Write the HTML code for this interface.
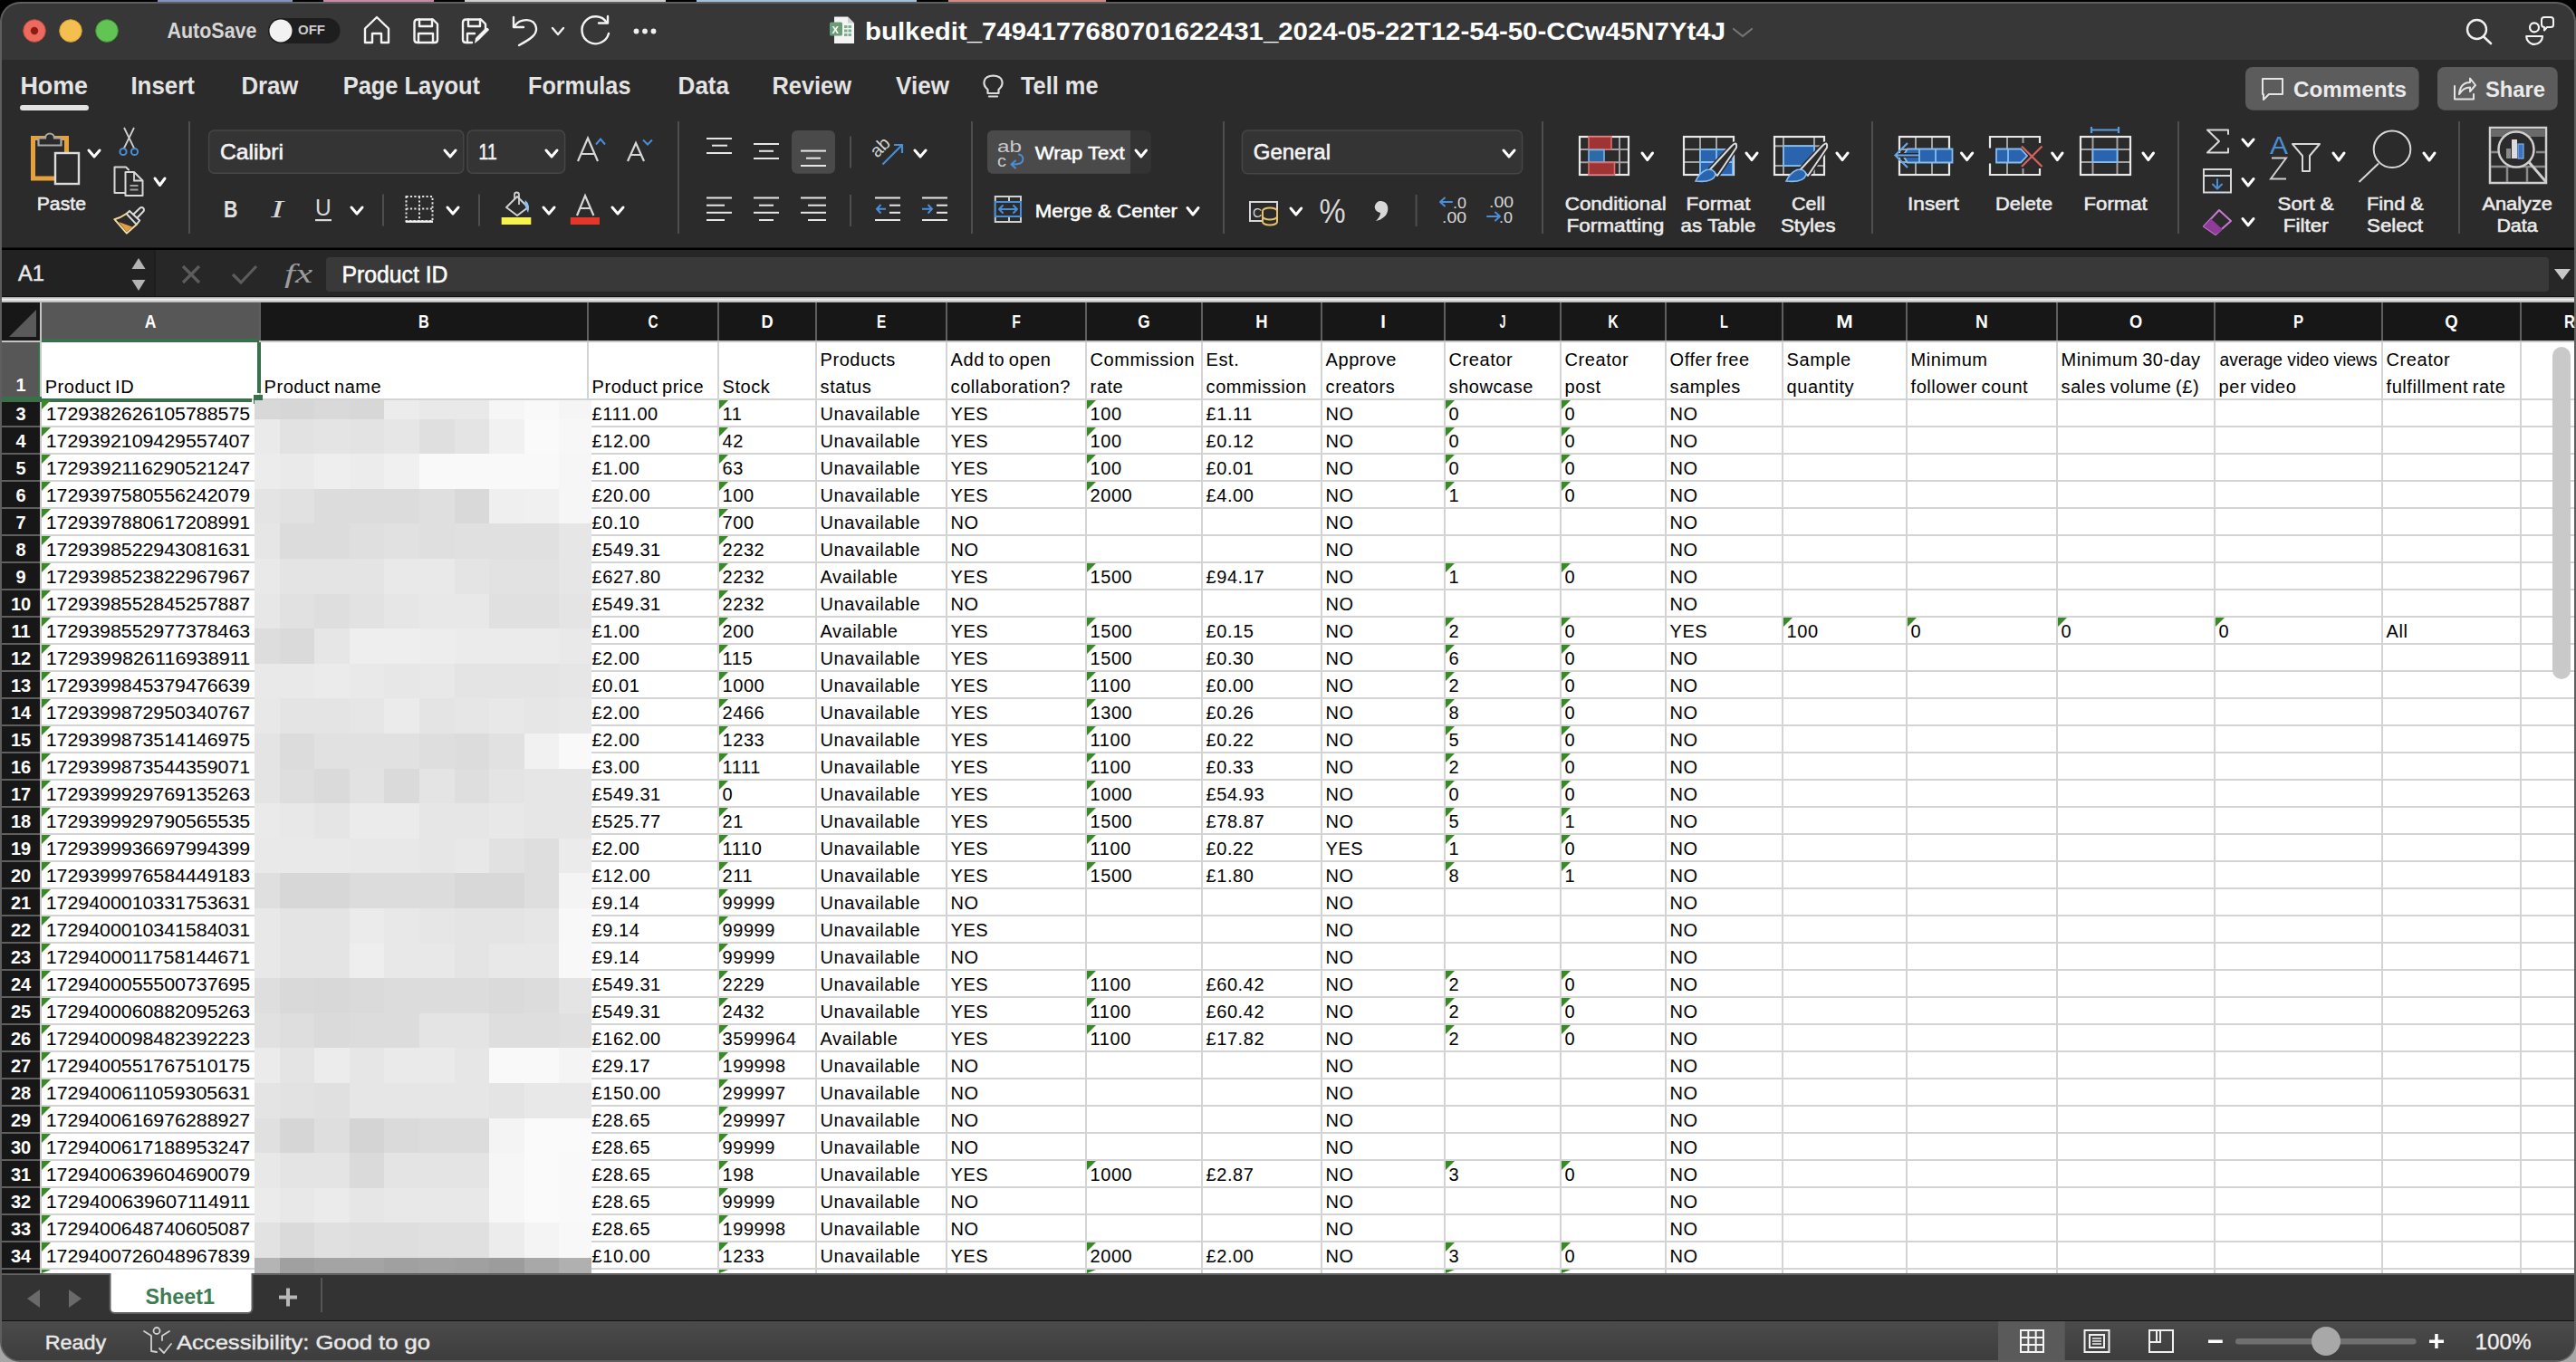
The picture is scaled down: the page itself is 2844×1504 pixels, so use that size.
<!DOCTYPE html><html><head><meta charset="utf-8"><style>html,body{margin:0;padding:0;background:#000;overflow:hidden}svg{display:block}text{white-space:pre}</style></head><body><svg width="2844" height="1504" viewBox="0 0 2844 1504"><rect x="0" y="0" width="2844" height="1504" fill="#000" />
<rect x="0" y="760" width="2844" height="744" fill="#a6a6a6" />
<rect x="174" y="0" width="149" height="2" fill="#7f93c0" />
<rect x="357" y="0" width="122" height="2" fill="#c88aa8" />
<rect x="513" y="0" width="222" height="2" fill="#cfcfcf" />
<rect x="769" y="0" width="243" height="2" fill="#9fc0d8" />
<rect x="1047" y="0" width="174" height="2" fill="#d08a80" />
<g>
<rect x="0" y="2" width="2844" height="1502" fill="#5e5e5e" rx="22" />
<rect x="2" y="4" width="2840" height="1498" fill="#373737" rx="20" />
</g>
<rect x="2" y="66" width="2840" height="207" fill="#2b2b2b" />
<rect x="2" y="273" width="2840" height="1" fill="#151515" />
<rect x="2" y="274" width="2840" height="2" fill="#000000" />
<rect x="2" y="276" width="2840" height="51" fill="#272727" />
<rect x="2" y="276" width="168" height="51" fill="#222222" />
<rect x="170" y="276" width="2" height="51" fill="#1e1e1e" />
<rect x="2" y="327" width="2840" height="1" fill="#111" />
<defs><linearGradient id="lg1" x1="0" y1="0" x2="0" y2="1"><stop offset="0" stop-color="#9a9a9a"/><stop offset="0.45" stop-color="#f4f4f4"/><stop offset="1" stop-color="#a8a8a8"/></linearGradient><linearGradient id="sb" x1="0" y1="0" x2="0" y2="1"><stop offset="0" stop-color="#4b4b4b"/><stop offset="1" stop-color="#3d3d3d"/></linearGradient></defs>
<rect x="2" y="328" width="2840" height="6" fill="url(#lg1)" />
<rect x="46" y="378" width="2796" height="1028" fill="#ffffff" />
<rect x="2" y="334" width="2840" height="42" fill="#171717" />
<rect x="46" y="334" width="240" height="40" fill="#575757" />
<rect x="46" y="374" width="240" height="4" fill="#3a7049" />
<text x="166.0" y="362" font-family="Liberation Sans" font-size="21" font-weight="bold" font-style="normal" fill="#ffffff" text-anchor="middle" textLength="12.7" lengthAdjust="spacingAndGlyphs" >A</text>
<rect x="286" y="334" width="2" height="42" fill="#5f5f5f" />
<text x="468.0" y="362" font-family="Liberation Sans" font-size="21" font-weight="bold" font-style="normal" fill="#ffffff" text-anchor="middle" textLength="11.8" lengthAdjust="spacingAndGlyphs" >B</text>
<rect x="648" y="334" width="2" height="42" fill="#5f5f5f" />
<text x="721.0" y="362" font-family="Liberation Sans" font-size="21" font-weight="bold" font-style="normal" fill="#ffffff" text-anchor="middle" textLength="11.1" lengthAdjust="spacingAndGlyphs" >C</text>
<rect x="792" y="334" width="2" height="42" fill="#5f5f5f" />
<text x="847.0" y="362" font-family="Liberation Sans" font-size="21" font-weight="bold" font-style="normal" fill="#ffffff" text-anchor="middle" textLength="13.2" lengthAdjust="spacingAndGlyphs" >D</text>
<rect x="900" y="334" width="2" height="42" fill="#5f5f5f" />
<text x="973.0" y="362" font-family="Liberation Sans" font-size="21" font-weight="bold" font-style="normal" fill="#ffffff" text-anchor="middle" textLength="10.2" lengthAdjust="spacingAndGlyphs" >E</text>
<rect x="1044" y="334" width="2" height="42" fill="#5f5f5f" />
<text x="1122.0" y="362" font-family="Liberation Sans" font-size="21" font-weight="bold" font-style="normal" fill="#ffffff" text-anchor="middle" textLength="9.6" lengthAdjust="spacingAndGlyphs" >F</text>
<rect x="1198" y="334" width="2" height="42" fill="#5f5f5f" />
<text x="1263.0" y="362" font-family="Liberation Sans" font-size="21" font-weight="bold" font-style="normal" fill="#ffffff" text-anchor="middle" textLength="13.4" lengthAdjust="spacingAndGlyphs" >G</text>
<rect x="1326" y="334" width="2" height="42" fill="#5f5f5f" />
<text x="1393.0" y="362" font-family="Liberation Sans" font-size="21" font-weight="bold" font-style="normal" fill="#ffffff" text-anchor="middle" textLength="13.3" lengthAdjust="spacingAndGlyphs" >H</text>
<rect x="1458" y="334" width="2" height="42" fill="#5f5f5f" />
<text x="1527.0" y="362" font-family="Liberation Sans" font-size="21" font-weight="bold" font-style="normal" fill="#ffffff" text-anchor="middle" textLength="5.6" lengthAdjust="spacingAndGlyphs" >I</text>
<rect x="1594" y="334" width="2" height="42" fill="#5f5f5f" />
<text x="1659.0" y="362" font-family="Liberation Sans" font-size="21" font-weight="bold" font-style="normal" fill="#ffffff" text-anchor="middle" textLength="7" lengthAdjust="spacingAndGlyphs" >J</text>
<rect x="1722" y="334" width="2" height="42" fill="#5f5f5f" />
<text x="1781.0" y="362" font-family="Liberation Sans" font-size="21" font-weight="bold" font-style="normal" fill="#ffffff" text-anchor="middle" textLength="11.5" lengthAdjust="spacingAndGlyphs" >K</text>
<rect x="1838" y="334" width="2" height="42" fill="#5f5f5f" />
<text x="1903.5" y="362" font-family="Liberation Sans" font-size="21" font-weight="bold" font-style="normal" fill="#ffffff" text-anchor="middle" textLength="8.9" lengthAdjust="spacingAndGlyphs" >L</text>
<rect x="1967" y="334" width="2" height="42" fill="#5f5f5f" />
<text x="2036.5" y="362" font-family="Liberation Sans" font-size="21" font-weight="bold" font-style="normal" fill="#ffffff" text-anchor="middle" textLength="18.4" lengthAdjust="spacingAndGlyphs" >M</text>
<rect x="2104" y="334" width="2" height="42" fill="#5f5f5f" />
<text x="2188.0" y="362" font-family="Liberation Sans" font-size="21" font-weight="bold" font-style="normal" fill="#ffffff" text-anchor="middle" textLength="13.8" lengthAdjust="spacingAndGlyphs" >N</text>
<rect x="2270" y="334" width="2" height="42" fill="#5f5f5f" />
<text x="2358.0" y="362" font-family="Liberation Sans" font-size="21" font-weight="bold" font-style="normal" fill="#ffffff" text-anchor="middle" textLength="14.2" lengthAdjust="spacingAndGlyphs" >O</text>
<rect x="2444" y="334" width="2" height="42" fill="#5f5f5f" />
<text x="2537.5" y="362" font-family="Liberation Sans" font-size="21" font-weight="bold" font-style="normal" fill="#ffffff" text-anchor="middle" textLength="11.2" lengthAdjust="spacingAndGlyphs" >P</text>
<rect x="2629" y="334" width="2" height="42" fill="#5f5f5f" />
<text x="2706.5" y="362" font-family="Liberation Sans" font-size="21" font-weight="bold" font-style="normal" fill="#ffffff" text-anchor="middle" textLength="14.4" lengthAdjust="spacingAndGlyphs" >Q</text>
<rect x="2782" y="334" width="2" height="42" fill="#5f5f5f" />
<text x="2837" y="362" font-family="Liberation Sans" font-size="21" font-weight="bold" font-style="normal" fill="#ffffff" text-anchor="middle" textLength="11.8" lengthAdjust="spacingAndGlyphs" >R</text>
<rect x="2" y="376" width="2840" height="2" fill="#c4c4c4" />
<rect x="46" y="374" width="240" height="4" fill="#3a7049" />
<rect x="44" y="334" width="2" height="44" fill="#c4c4c4" />
<path d="M10 372 L40 342 L40 372 Z" stroke="none" stroke-width="2" fill="#5a5a5a" />
<rect x="2" y="378" width="42" height="1028" fill="#171717" />
<rect x="2" y="378" width="40" height="62" fill="#575757" />
<rect x="42" y="378" width="4" height="66" fill="#3a7049" />
<rect x="44" y="378" width="2" height="1028" fill="#c8c8c8" />
<rect x="2" y="440" width="42" height="2" fill="#5e5e5e" />
<rect x="46" y="440" width="2796" height="2" fill="#d4d4d4" />
<text x="23" y="464" font-family="Liberation Sans" font-size="20" font-weight="bold" font-style="normal" fill="#ffffff" text-anchor="middle" >3</text>
<rect x="2" y="470" width="42" height="2" fill="#5e5e5e" />
<rect x="46" y="470" width="2796" height="2" fill="#d4d4d4" />
<text x="23" y="494" font-family="Liberation Sans" font-size="20" font-weight="bold" font-style="normal" fill="#ffffff" text-anchor="middle" >4</text>
<rect x="2" y="500" width="42" height="2" fill="#5e5e5e" />
<rect x="46" y="500" width="2796" height="2" fill="#d4d4d4" />
<text x="23" y="524" font-family="Liberation Sans" font-size="20" font-weight="bold" font-style="normal" fill="#ffffff" text-anchor="middle" >5</text>
<rect x="2" y="530" width="42" height="2" fill="#5e5e5e" />
<rect x="46" y="530" width="2796" height="2" fill="#d4d4d4" />
<text x="23" y="554" font-family="Liberation Sans" font-size="20" font-weight="bold" font-style="normal" fill="#ffffff" text-anchor="middle" >6</text>
<rect x="2" y="560" width="42" height="2" fill="#5e5e5e" />
<rect x="46" y="560" width="2796" height="2" fill="#d4d4d4" />
<text x="23" y="584" font-family="Liberation Sans" font-size="20" font-weight="bold" font-style="normal" fill="#ffffff" text-anchor="middle" >7</text>
<rect x="2" y="590" width="42" height="2" fill="#5e5e5e" />
<rect x="46" y="590" width="2796" height="2" fill="#d4d4d4" />
<text x="23" y="614" font-family="Liberation Sans" font-size="20" font-weight="bold" font-style="normal" fill="#ffffff" text-anchor="middle" >8</text>
<rect x="2" y="620" width="42" height="2" fill="#5e5e5e" />
<rect x="46" y="620" width="2796" height="2" fill="#d4d4d4" />
<text x="23" y="644" font-family="Liberation Sans" font-size="20" font-weight="bold" font-style="normal" fill="#ffffff" text-anchor="middle" >9</text>
<rect x="2" y="650" width="42" height="2" fill="#5e5e5e" />
<rect x="46" y="650" width="2796" height="2" fill="#d4d4d4" />
<text x="23" y="674" font-family="Liberation Sans" font-size="20" font-weight="bold" font-style="normal" fill="#ffffff" text-anchor="middle" >10</text>
<rect x="2" y="680" width="42" height="2" fill="#5e5e5e" />
<rect x="46" y="680" width="2796" height="2" fill="#d4d4d4" />
<text x="23" y="704" font-family="Liberation Sans" font-size="20" font-weight="bold" font-style="normal" fill="#ffffff" text-anchor="middle" >11</text>
<rect x="2" y="710" width="42" height="2" fill="#5e5e5e" />
<rect x="46" y="710" width="2796" height="2" fill="#d4d4d4" />
<text x="23" y="734" font-family="Liberation Sans" font-size="20" font-weight="bold" font-style="normal" fill="#ffffff" text-anchor="middle" >12</text>
<rect x="2" y="740" width="42" height="2" fill="#5e5e5e" />
<rect x="46" y="740" width="2796" height="2" fill="#d4d4d4" />
<text x="23" y="764" font-family="Liberation Sans" font-size="20" font-weight="bold" font-style="normal" fill="#ffffff" text-anchor="middle" >13</text>
<rect x="2" y="770" width="42" height="2" fill="#5e5e5e" />
<rect x="46" y="770" width="2796" height="2" fill="#d4d4d4" />
<text x="23" y="794" font-family="Liberation Sans" font-size="20" font-weight="bold" font-style="normal" fill="#ffffff" text-anchor="middle" >14</text>
<rect x="2" y="800" width="42" height="2" fill="#5e5e5e" />
<rect x="46" y="800" width="2796" height="2" fill="#d4d4d4" />
<text x="23" y="824" font-family="Liberation Sans" font-size="20" font-weight="bold" font-style="normal" fill="#ffffff" text-anchor="middle" >15</text>
<rect x="2" y="830" width="42" height="2" fill="#5e5e5e" />
<rect x="46" y="830" width="2796" height="2" fill="#d4d4d4" />
<text x="23" y="854" font-family="Liberation Sans" font-size="20" font-weight="bold" font-style="normal" fill="#ffffff" text-anchor="middle" >16</text>
<rect x="2" y="860" width="42" height="2" fill="#5e5e5e" />
<rect x="46" y="860" width="2796" height="2" fill="#d4d4d4" />
<text x="23" y="884" font-family="Liberation Sans" font-size="20" font-weight="bold" font-style="normal" fill="#ffffff" text-anchor="middle" >17</text>
<rect x="2" y="890" width="42" height="2" fill="#5e5e5e" />
<rect x="46" y="890" width="2796" height="2" fill="#d4d4d4" />
<text x="23" y="914" font-family="Liberation Sans" font-size="20" font-weight="bold" font-style="normal" fill="#ffffff" text-anchor="middle" >18</text>
<rect x="2" y="920" width="42" height="2" fill="#5e5e5e" />
<rect x="46" y="920" width="2796" height="2" fill="#d4d4d4" />
<text x="23" y="944" font-family="Liberation Sans" font-size="20" font-weight="bold" font-style="normal" fill="#ffffff" text-anchor="middle" >19</text>
<rect x="2" y="950" width="42" height="2" fill="#5e5e5e" />
<rect x="46" y="950" width="2796" height="2" fill="#d4d4d4" />
<text x="23" y="974" font-family="Liberation Sans" font-size="20" font-weight="bold" font-style="normal" fill="#ffffff" text-anchor="middle" >20</text>
<rect x="2" y="980" width="42" height="2" fill="#5e5e5e" />
<rect x="46" y="980" width="2796" height="2" fill="#d4d4d4" />
<text x="23" y="1004" font-family="Liberation Sans" font-size="20" font-weight="bold" font-style="normal" fill="#ffffff" text-anchor="middle" >21</text>
<rect x="2" y="1010" width="42" height="2" fill="#5e5e5e" />
<rect x="46" y="1010" width="2796" height="2" fill="#d4d4d4" />
<text x="23" y="1034" font-family="Liberation Sans" font-size="20" font-weight="bold" font-style="normal" fill="#ffffff" text-anchor="middle" >22</text>
<rect x="2" y="1040" width="42" height="2" fill="#5e5e5e" />
<rect x="46" y="1040" width="2796" height="2" fill="#d4d4d4" />
<text x="23" y="1064" font-family="Liberation Sans" font-size="20" font-weight="bold" font-style="normal" fill="#ffffff" text-anchor="middle" >23</text>
<rect x="2" y="1070" width="42" height="2" fill="#5e5e5e" />
<rect x="46" y="1070" width="2796" height="2" fill="#d4d4d4" />
<text x="23" y="1094" font-family="Liberation Sans" font-size="20" font-weight="bold" font-style="normal" fill="#ffffff" text-anchor="middle" >24</text>
<rect x="2" y="1100" width="42" height="2" fill="#5e5e5e" />
<rect x="46" y="1100" width="2796" height="2" fill="#d4d4d4" />
<text x="23" y="1124" font-family="Liberation Sans" font-size="20" font-weight="bold" font-style="normal" fill="#ffffff" text-anchor="middle" >25</text>
<rect x="2" y="1130" width="42" height="2" fill="#5e5e5e" />
<rect x="46" y="1130" width="2796" height="2" fill="#d4d4d4" />
<text x="23" y="1154" font-family="Liberation Sans" font-size="20" font-weight="bold" font-style="normal" fill="#ffffff" text-anchor="middle" >26</text>
<rect x="2" y="1160" width="42" height="2" fill="#5e5e5e" />
<rect x="46" y="1160" width="2796" height="2" fill="#d4d4d4" />
<text x="23" y="1184" font-family="Liberation Sans" font-size="20" font-weight="bold" font-style="normal" fill="#ffffff" text-anchor="middle" >27</text>
<rect x="2" y="1190" width="42" height="2" fill="#5e5e5e" />
<rect x="46" y="1190" width="2796" height="2" fill="#d4d4d4" />
<text x="23" y="1214" font-family="Liberation Sans" font-size="20" font-weight="bold" font-style="normal" fill="#ffffff" text-anchor="middle" >28</text>
<rect x="2" y="1220" width="42" height="2" fill="#5e5e5e" />
<rect x="46" y="1220" width="2796" height="2" fill="#d4d4d4" />
<text x="23" y="1244" font-family="Liberation Sans" font-size="20" font-weight="bold" font-style="normal" fill="#ffffff" text-anchor="middle" >29</text>
<rect x="2" y="1250" width="42" height="2" fill="#5e5e5e" />
<rect x="46" y="1250" width="2796" height="2" fill="#d4d4d4" />
<text x="23" y="1274" font-family="Liberation Sans" font-size="20" font-weight="bold" font-style="normal" fill="#ffffff" text-anchor="middle" >30</text>
<rect x="2" y="1280" width="42" height="2" fill="#5e5e5e" />
<rect x="46" y="1280" width="2796" height="2" fill="#d4d4d4" />
<text x="23" y="1304" font-family="Liberation Sans" font-size="20" font-weight="bold" font-style="normal" fill="#ffffff" text-anchor="middle" >31</text>
<rect x="2" y="1310" width="42" height="2" fill="#5e5e5e" />
<rect x="46" y="1310" width="2796" height="2" fill="#d4d4d4" />
<text x="23" y="1334" font-family="Liberation Sans" font-size="20" font-weight="bold" font-style="normal" fill="#ffffff" text-anchor="middle" >32</text>
<rect x="2" y="1340" width="42" height="2" fill="#5e5e5e" />
<rect x="46" y="1340" width="2796" height="2" fill="#d4d4d4" />
<text x="23" y="1364" font-family="Liberation Sans" font-size="20" font-weight="bold" font-style="normal" fill="#ffffff" text-anchor="middle" >33</text>
<rect x="2" y="1370" width="42" height="2" fill="#5e5e5e" />
<rect x="46" y="1370" width="2796" height="2" fill="#d4d4d4" />
<text x="23" y="1394" font-family="Liberation Sans" font-size="20" font-weight="bold" font-style="normal" fill="#ffffff" text-anchor="middle" >34</text>
<rect x="2" y="1400" width="42" height="2" fill="#5e5e5e" />
<rect x="46" y="1400" width="2796" height="2" fill="#d4d4d4" />
<text x="23" y="432" font-family="Liberation Sans" font-size="20" font-weight="bold" font-style="normal" fill="#ffffff" text-anchor="middle" >1</text>
<rect x="286" y="378" width="2" height="1028" fill="#d4d4d4" />
<rect x="648" y="378" width="2" height="1028" fill="#d4d4d4" />
<rect x="792" y="378" width="2" height="1028" fill="#d4d4d4" />
<rect x="900" y="378" width="2" height="1028" fill="#d4d4d4" />
<rect x="1044" y="378" width="2" height="1028" fill="#d4d4d4" />
<rect x="1198" y="378" width="2" height="1028" fill="#d4d4d4" />
<rect x="1326" y="378" width="2" height="1028" fill="#d4d4d4" />
<rect x="1458" y="378" width="2" height="1028" fill="#d4d4d4" />
<rect x="1594" y="378" width="2" height="1028" fill="#d4d4d4" />
<rect x="1722" y="378" width="2" height="1028" fill="#d4d4d4" />
<rect x="1838" y="378" width="2" height="1028" fill="#d4d4d4" />
<rect x="1967" y="378" width="2" height="1028" fill="#d4d4d4" />
<rect x="2104" y="378" width="2" height="1028" fill="#d4d4d4" />
<rect x="2270" y="378" width="2" height="1028" fill="#d4d4d4" />
<rect x="2444" y="378" width="2" height="1028" fill="#d4d4d4" />
<rect x="2629" y="378" width="2" height="1028" fill="#d4d4d4" />
<rect x="2782" y="378" width="2" height="1028" fill="#d4d4d4" />
<rect x="2" y="438" width="44" height="6" fill="#3a7049" />
<rect x="46" y="440" width="232" height="4" fill="#3a7049" />
<rect x="284" y="378" width="4" height="56" fill="#3a7049" />
<rect x="280" y="436" width="10" height="6" fill="#3a7049" />
<rect x="280" y="442" width="2" height="4" fill="#3a7049" />
<path d="M46 442 L56 442 L46 452 Z" stroke="none" stroke-width="2" fill="#388a27" />
<text x="50.7" y="463.8" font-family="Liberation Sans" font-size="20" font-weight="normal" font-style="normal" fill="#000" text-anchor="start" textLength="225.5" lengthAdjust="spacingAndGlyphs" >1729382626105788575</text>
<text x="653.6" y="463.8" font-family="Liberation Sans" font-size="20" font-weight="normal" font-style="normal" fill="#000" text-anchor="start" letter-spacing="0.55" word-spacing="-1.5">£111.00</text>
<path d="M794 442 L804 442 L794 452 Z" stroke="none" stroke-width="2" fill="#388a27" />
<text x="797.6" y="463.8" font-family="Liberation Sans" font-size="20" font-weight="normal" font-style="normal" fill="#000" text-anchor="start" letter-spacing="0.55" word-spacing="-1.5">11</text>
<text x="905.6" y="463.8" font-family="Liberation Sans" font-size="20" font-weight="normal" font-style="normal" fill="#000" text-anchor="start" letter-spacing="0.55" word-spacing="-1.5">Unavailable</text>
<text x="1049.6" y="463.8" font-family="Liberation Sans" font-size="20" font-weight="normal" font-style="normal" fill="#000" text-anchor="start" letter-spacing="0.55" word-spacing="-1.5">YES</text>
<path d="M1200 442 L1210 442 L1200 452 Z" stroke="none" stroke-width="2" fill="#388a27" />
<text x="1203.6" y="463.8" font-family="Liberation Sans" font-size="20" font-weight="normal" font-style="normal" fill="#000" text-anchor="start" letter-spacing="0.55" word-spacing="-1.5">100</text>
<text x="1331.6" y="463.8" font-family="Liberation Sans" font-size="20" font-weight="normal" font-style="normal" fill="#000" text-anchor="start" letter-spacing="0.55" word-spacing="-1.5">£1.11</text>
<text x="1463.6" y="463.8" font-family="Liberation Sans" font-size="20" font-weight="normal" font-style="normal" fill="#000" text-anchor="start" letter-spacing="0.55" word-spacing="-1.5">NO</text>
<path d="M1596 442 L1606 442 L1596 452 Z" stroke="none" stroke-width="2" fill="#388a27" />
<text x="1599.6" y="463.8" font-family="Liberation Sans" font-size="20" font-weight="normal" font-style="normal" fill="#000" text-anchor="start" letter-spacing="0.55" word-spacing="-1.5">0</text>
<path d="M1724 442 L1734 442 L1724 452 Z" stroke="none" stroke-width="2" fill="#388a27" />
<text x="1727.6" y="463.8" font-family="Liberation Sans" font-size="20" font-weight="normal" font-style="normal" fill="#000" text-anchor="start" letter-spacing="0.55" word-spacing="-1.5">0</text>
<text x="1843.6" y="463.8" font-family="Liberation Sans" font-size="20" font-weight="normal" font-style="normal" fill="#000" text-anchor="start" letter-spacing="0.55" word-spacing="-1.5">NO</text>
<path d="M46 472 L56 472 L46 482 Z" stroke="none" stroke-width="2" fill="#388a27" />
<text x="50.7" y="493.8" font-family="Liberation Sans" font-size="20" font-weight="normal" font-style="normal" fill="#000" text-anchor="start" textLength="225.5" lengthAdjust="spacingAndGlyphs" >1729392109429557407</text>
<text x="653.6" y="493.8" font-family="Liberation Sans" font-size="20" font-weight="normal" font-style="normal" fill="#000" text-anchor="start" letter-spacing="0.55" word-spacing="-1.5">£12.00</text>
<path d="M794 472 L804 472 L794 482 Z" stroke="none" stroke-width="2" fill="#388a27" />
<text x="797.6" y="493.8" font-family="Liberation Sans" font-size="20" font-weight="normal" font-style="normal" fill="#000" text-anchor="start" letter-spacing="0.55" word-spacing="-1.5">42</text>
<text x="905.6" y="493.8" font-family="Liberation Sans" font-size="20" font-weight="normal" font-style="normal" fill="#000" text-anchor="start" letter-spacing="0.55" word-spacing="-1.5">Unavailable</text>
<text x="1049.6" y="493.8" font-family="Liberation Sans" font-size="20" font-weight="normal" font-style="normal" fill="#000" text-anchor="start" letter-spacing="0.55" word-spacing="-1.5">YES</text>
<path d="M1200 472 L1210 472 L1200 482 Z" stroke="none" stroke-width="2" fill="#388a27" />
<text x="1203.6" y="493.8" font-family="Liberation Sans" font-size="20" font-weight="normal" font-style="normal" fill="#000" text-anchor="start" letter-spacing="0.55" word-spacing="-1.5">100</text>
<text x="1331.6" y="493.8" font-family="Liberation Sans" font-size="20" font-weight="normal" font-style="normal" fill="#000" text-anchor="start" letter-spacing="0.55" word-spacing="-1.5">£0.12</text>
<text x="1463.6" y="493.8" font-family="Liberation Sans" font-size="20" font-weight="normal" font-style="normal" fill="#000" text-anchor="start" letter-spacing="0.55" word-spacing="-1.5">NO</text>
<path d="M1596 472 L1606 472 L1596 482 Z" stroke="none" stroke-width="2" fill="#388a27" />
<text x="1599.6" y="493.8" font-family="Liberation Sans" font-size="20" font-weight="normal" font-style="normal" fill="#000" text-anchor="start" letter-spacing="0.55" word-spacing="-1.5">0</text>
<path d="M1724 472 L1734 472 L1724 482 Z" stroke="none" stroke-width="2" fill="#388a27" />
<text x="1727.6" y="493.8" font-family="Liberation Sans" font-size="20" font-weight="normal" font-style="normal" fill="#000" text-anchor="start" letter-spacing="0.55" word-spacing="-1.5">0</text>
<text x="1843.6" y="493.8" font-family="Liberation Sans" font-size="20" font-weight="normal" font-style="normal" fill="#000" text-anchor="start" letter-spacing="0.55" word-spacing="-1.5">NO</text>
<path d="M46 502 L56 502 L46 512 Z" stroke="none" stroke-width="2" fill="#388a27" />
<text x="50.7" y="523.8" font-family="Liberation Sans" font-size="20" font-weight="normal" font-style="normal" fill="#000" text-anchor="start" textLength="225.5" lengthAdjust="spacingAndGlyphs" >1729392116290521247</text>
<text x="653.6" y="523.8" font-family="Liberation Sans" font-size="20" font-weight="normal" font-style="normal" fill="#000" text-anchor="start" letter-spacing="0.55" word-spacing="-1.5">£1.00</text>
<path d="M794 502 L804 502 L794 512 Z" stroke="none" stroke-width="2" fill="#388a27" />
<text x="797.6" y="523.8" font-family="Liberation Sans" font-size="20" font-weight="normal" font-style="normal" fill="#000" text-anchor="start" letter-spacing="0.55" word-spacing="-1.5">63</text>
<text x="905.6" y="523.8" font-family="Liberation Sans" font-size="20" font-weight="normal" font-style="normal" fill="#000" text-anchor="start" letter-spacing="0.55" word-spacing="-1.5">Unavailable</text>
<text x="1049.6" y="523.8" font-family="Liberation Sans" font-size="20" font-weight="normal" font-style="normal" fill="#000" text-anchor="start" letter-spacing="0.55" word-spacing="-1.5">YES</text>
<path d="M1200 502 L1210 502 L1200 512 Z" stroke="none" stroke-width="2" fill="#388a27" />
<text x="1203.6" y="523.8" font-family="Liberation Sans" font-size="20" font-weight="normal" font-style="normal" fill="#000" text-anchor="start" letter-spacing="0.55" word-spacing="-1.5">100</text>
<text x="1331.6" y="523.8" font-family="Liberation Sans" font-size="20" font-weight="normal" font-style="normal" fill="#000" text-anchor="start" letter-spacing="0.55" word-spacing="-1.5">£0.01</text>
<text x="1463.6" y="523.8" font-family="Liberation Sans" font-size="20" font-weight="normal" font-style="normal" fill="#000" text-anchor="start" letter-spacing="0.55" word-spacing="-1.5">NO</text>
<path d="M1596 502 L1606 502 L1596 512 Z" stroke="none" stroke-width="2" fill="#388a27" />
<text x="1599.6" y="523.8" font-family="Liberation Sans" font-size="20" font-weight="normal" font-style="normal" fill="#000" text-anchor="start" letter-spacing="0.55" word-spacing="-1.5">0</text>
<path d="M1724 502 L1734 502 L1724 512 Z" stroke="none" stroke-width="2" fill="#388a27" />
<text x="1727.6" y="523.8" font-family="Liberation Sans" font-size="20" font-weight="normal" font-style="normal" fill="#000" text-anchor="start" letter-spacing="0.55" word-spacing="-1.5">0</text>
<text x="1843.6" y="523.8" font-family="Liberation Sans" font-size="20" font-weight="normal" font-style="normal" fill="#000" text-anchor="start" letter-spacing="0.55" word-spacing="-1.5">NO</text>
<path d="M46 532 L56 532 L46 542 Z" stroke="none" stroke-width="2" fill="#388a27" />
<text x="50.7" y="553.8" font-family="Liberation Sans" font-size="20" font-weight="normal" font-style="normal" fill="#000" text-anchor="start" textLength="225.5" lengthAdjust="spacingAndGlyphs" >1729397580556242079</text>
<text x="653.6" y="553.8" font-family="Liberation Sans" font-size="20" font-weight="normal" font-style="normal" fill="#000" text-anchor="start" letter-spacing="0.55" word-spacing="-1.5">£20.00</text>
<path d="M794 532 L804 532 L794 542 Z" stroke="none" stroke-width="2" fill="#388a27" />
<text x="797.6" y="553.8" font-family="Liberation Sans" font-size="20" font-weight="normal" font-style="normal" fill="#000" text-anchor="start" letter-spacing="0.55" word-spacing="-1.5">100</text>
<text x="905.6" y="553.8" font-family="Liberation Sans" font-size="20" font-weight="normal" font-style="normal" fill="#000" text-anchor="start" letter-spacing="0.55" word-spacing="-1.5">Unavailable</text>
<text x="1049.6" y="553.8" font-family="Liberation Sans" font-size="20" font-weight="normal" font-style="normal" fill="#000" text-anchor="start" letter-spacing="0.55" word-spacing="-1.5">YES</text>
<path d="M1200 532 L1210 532 L1200 542 Z" stroke="none" stroke-width="2" fill="#388a27" />
<text x="1203.6" y="553.8" font-family="Liberation Sans" font-size="20" font-weight="normal" font-style="normal" fill="#000" text-anchor="start" letter-spacing="0.55" word-spacing="-1.5">2000</text>
<text x="1331.6" y="553.8" font-family="Liberation Sans" font-size="20" font-weight="normal" font-style="normal" fill="#000" text-anchor="start" letter-spacing="0.55" word-spacing="-1.5">£4.00</text>
<text x="1463.6" y="553.8" font-family="Liberation Sans" font-size="20" font-weight="normal" font-style="normal" fill="#000" text-anchor="start" letter-spacing="0.55" word-spacing="-1.5">NO</text>
<path d="M1596 532 L1606 532 L1596 542 Z" stroke="none" stroke-width="2" fill="#388a27" />
<text x="1599.6" y="553.8" font-family="Liberation Sans" font-size="20" font-weight="normal" font-style="normal" fill="#000" text-anchor="start" letter-spacing="0.55" word-spacing="-1.5">1</text>
<path d="M1724 532 L1734 532 L1724 542 Z" stroke="none" stroke-width="2" fill="#388a27" />
<text x="1727.6" y="553.8" font-family="Liberation Sans" font-size="20" font-weight="normal" font-style="normal" fill="#000" text-anchor="start" letter-spacing="0.55" word-spacing="-1.5">0</text>
<text x="1843.6" y="553.8" font-family="Liberation Sans" font-size="20" font-weight="normal" font-style="normal" fill="#000" text-anchor="start" letter-spacing="0.55" word-spacing="-1.5">NO</text>
<path d="M46 562 L56 562 L46 572 Z" stroke="none" stroke-width="2" fill="#388a27" />
<text x="50.7" y="583.8" font-family="Liberation Sans" font-size="20" font-weight="normal" font-style="normal" fill="#000" text-anchor="start" textLength="225.5" lengthAdjust="spacingAndGlyphs" >1729397880617208991</text>
<text x="653.6" y="583.8" font-family="Liberation Sans" font-size="20" font-weight="normal" font-style="normal" fill="#000" text-anchor="start" letter-spacing="0.55" word-spacing="-1.5">£0.10</text>
<path d="M794 562 L804 562 L794 572 Z" stroke="none" stroke-width="2" fill="#388a27" />
<text x="797.6" y="583.8" font-family="Liberation Sans" font-size="20" font-weight="normal" font-style="normal" fill="#000" text-anchor="start" letter-spacing="0.55" word-spacing="-1.5">700</text>
<text x="905.6" y="583.8" font-family="Liberation Sans" font-size="20" font-weight="normal" font-style="normal" fill="#000" text-anchor="start" letter-spacing="0.55" word-spacing="-1.5">Unavailable</text>
<text x="1049.6" y="583.8" font-family="Liberation Sans" font-size="20" font-weight="normal" font-style="normal" fill="#000" text-anchor="start" letter-spacing="0.55" word-spacing="-1.5">NO</text>
<text x="1463.6" y="583.8" font-family="Liberation Sans" font-size="20" font-weight="normal" font-style="normal" fill="#000" text-anchor="start" letter-spacing="0.55" word-spacing="-1.5">NO</text>
<text x="1843.6" y="583.8" font-family="Liberation Sans" font-size="20" font-weight="normal" font-style="normal" fill="#000" text-anchor="start" letter-spacing="0.55" word-spacing="-1.5">NO</text>
<path d="M46 592 L56 592 L46 602 Z" stroke="none" stroke-width="2" fill="#388a27" />
<text x="50.7" y="613.8" font-family="Liberation Sans" font-size="20" font-weight="normal" font-style="normal" fill="#000" text-anchor="start" textLength="225.5" lengthAdjust="spacingAndGlyphs" >1729398522943081631</text>
<text x="653.6" y="613.8" font-family="Liberation Sans" font-size="20" font-weight="normal" font-style="normal" fill="#000" text-anchor="start" letter-spacing="0.55" word-spacing="-1.5">£549.31</text>
<path d="M794 592 L804 592 L794 602 Z" stroke="none" stroke-width="2" fill="#388a27" />
<text x="797.6" y="613.8" font-family="Liberation Sans" font-size="20" font-weight="normal" font-style="normal" fill="#000" text-anchor="start" letter-spacing="0.55" word-spacing="-1.5">2232</text>
<text x="905.6" y="613.8" font-family="Liberation Sans" font-size="20" font-weight="normal" font-style="normal" fill="#000" text-anchor="start" letter-spacing="0.55" word-spacing="-1.5">Unavailable</text>
<text x="1049.6" y="613.8" font-family="Liberation Sans" font-size="20" font-weight="normal" font-style="normal" fill="#000" text-anchor="start" letter-spacing="0.55" word-spacing="-1.5">NO</text>
<text x="1463.6" y="613.8" font-family="Liberation Sans" font-size="20" font-weight="normal" font-style="normal" fill="#000" text-anchor="start" letter-spacing="0.55" word-spacing="-1.5">NO</text>
<text x="1843.6" y="613.8" font-family="Liberation Sans" font-size="20" font-weight="normal" font-style="normal" fill="#000" text-anchor="start" letter-spacing="0.55" word-spacing="-1.5">NO</text>
<path d="M46 622 L56 622 L46 632 Z" stroke="none" stroke-width="2" fill="#388a27" />
<text x="50.7" y="643.8" font-family="Liberation Sans" font-size="20" font-weight="normal" font-style="normal" fill="#000" text-anchor="start" textLength="225.5" lengthAdjust="spacingAndGlyphs" >1729398523822967967</text>
<text x="653.6" y="643.8" font-family="Liberation Sans" font-size="20" font-weight="normal" font-style="normal" fill="#000" text-anchor="start" letter-spacing="0.55" word-spacing="-1.5">£627.80</text>
<path d="M794 622 L804 622 L794 632 Z" stroke="none" stroke-width="2" fill="#388a27" />
<text x="797.6" y="643.8" font-family="Liberation Sans" font-size="20" font-weight="normal" font-style="normal" fill="#000" text-anchor="start" letter-spacing="0.55" word-spacing="-1.5">2232</text>
<text x="905.6" y="643.8" font-family="Liberation Sans" font-size="20" font-weight="normal" font-style="normal" fill="#000" text-anchor="start" letter-spacing="0.55" word-spacing="-1.5">Available</text>
<text x="1049.6" y="643.8" font-family="Liberation Sans" font-size="20" font-weight="normal" font-style="normal" fill="#000" text-anchor="start" letter-spacing="0.55" word-spacing="-1.5">YES</text>
<path d="M1200 622 L1210 622 L1200 632 Z" stroke="none" stroke-width="2" fill="#388a27" />
<text x="1203.6" y="643.8" font-family="Liberation Sans" font-size="20" font-weight="normal" font-style="normal" fill="#000" text-anchor="start" letter-spacing="0.55" word-spacing="-1.5">1500</text>
<text x="1331.6" y="643.8" font-family="Liberation Sans" font-size="20" font-weight="normal" font-style="normal" fill="#000" text-anchor="start" letter-spacing="0.55" word-spacing="-1.5">£94.17</text>
<text x="1463.6" y="643.8" font-family="Liberation Sans" font-size="20" font-weight="normal" font-style="normal" fill="#000" text-anchor="start" letter-spacing="0.55" word-spacing="-1.5">NO</text>
<path d="M1596 622 L1606 622 L1596 632 Z" stroke="none" stroke-width="2" fill="#388a27" />
<text x="1599.6" y="643.8" font-family="Liberation Sans" font-size="20" font-weight="normal" font-style="normal" fill="#000" text-anchor="start" letter-spacing="0.55" word-spacing="-1.5">1</text>
<path d="M1724 622 L1734 622 L1724 632 Z" stroke="none" stroke-width="2" fill="#388a27" />
<text x="1727.6" y="643.8" font-family="Liberation Sans" font-size="20" font-weight="normal" font-style="normal" fill="#000" text-anchor="start" letter-spacing="0.55" word-spacing="-1.5">0</text>
<text x="1843.6" y="643.8" font-family="Liberation Sans" font-size="20" font-weight="normal" font-style="normal" fill="#000" text-anchor="start" letter-spacing="0.55" word-spacing="-1.5">NO</text>
<path d="M46 652 L56 652 L46 662 Z" stroke="none" stroke-width="2" fill="#388a27" />
<text x="50.7" y="673.8" font-family="Liberation Sans" font-size="20" font-weight="normal" font-style="normal" fill="#000" text-anchor="start" textLength="225.5" lengthAdjust="spacingAndGlyphs" >1729398552845257887</text>
<text x="653.6" y="673.8" font-family="Liberation Sans" font-size="20" font-weight="normal" font-style="normal" fill="#000" text-anchor="start" letter-spacing="0.55" word-spacing="-1.5">£549.31</text>
<path d="M794 652 L804 652 L794 662 Z" stroke="none" stroke-width="2" fill="#388a27" />
<text x="797.6" y="673.8" font-family="Liberation Sans" font-size="20" font-weight="normal" font-style="normal" fill="#000" text-anchor="start" letter-spacing="0.55" word-spacing="-1.5">2232</text>
<text x="905.6" y="673.8" font-family="Liberation Sans" font-size="20" font-weight="normal" font-style="normal" fill="#000" text-anchor="start" letter-spacing="0.55" word-spacing="-1.5">Unavailable</text>
<text x="1049.6" y="673.8" font-family="Liberation Sans" font-size="20" font-weight="normal" font-style="normal" fill="#000" text-anchor="start" letter-spacing="0.55" word-spacing="-1.5">NO</text>
<text x="1463.6" y="673.8" font-family="Liberation Sans" font-size="20" font-weight="normal" font-style="normal" fill="#000" text-anchor="start" letter-spacing="0.55" word-spacing="-1.5">NO</text>
<text x="1843.6" y="673.8" font-family="Liberation Sans" font-size="20" font-weight="normal" font-style="normal" fill="#000" text-anchor="start" letter-spacing="0.55" word-spacing="-1.5">NO</text>
<path d="M46 682 L56 682 L46 692 Z" stroke="none" stroke-width="2" fill="#388a27" />
<text x="50.7" y="703.8" font-family="Liberation Sans" font-size="20" font-weight="normal" font-style="normal" fill="#000" text-anchor="start" textLength="225.5" lengthAdjust="spacingAndGlyphs" >1729398552977378463</text>
<text x="653.6" y="703.8" font-family="Liberation Sans" font-size="20" font-weight="normal" font-style="normal" fill="#000" text-anchor="start" letter-spacing="0.55" word-spacing="-1.5">£1.00</text>
<path d="M794 682 L804 682 L794 692 Z" stroke="none" stroke-width="2" fill="#388a27" />
<text x="797.6" y="703.8" font-family="Liberation Sans" font-size="20" font-weight="normal" font-style="normal" fill="#000" text-anchor="start" letter-spacing="0.55" word-spacing="-1.5">200</text>
<text x="905.6" y="703.8" font-family="Liberation Sans" font-size="20" font-weight="normal" font-style="normal" fill="#000" text-anchor="start" letter-spacing="0.55" word-spacing="-1.5">Available</text>
<text x="1049.6" y="703.8" font-family="Liberation Sans" font-size="20" font-weight="normal" font-style="normal" fill="#000" text-anchor="start" letter-spacing="0.55" word-spacing="-1.5">YES</text>
<path d="M1200 682 L1210 682 L1200 692 Z" stroke="none" stroke-width="2" fill="#388a27" />
<text x="1203.6" y="703.8" font-family="Liberation Sans" font-size="20" font-weight="normal" font-style="normal" fill="#000" text-anchor="start" letter-spacing="0.55" word-spacing="-1.5">1500</text>
<text x="1331.6" y="703.8" font-family="Liberation Sans" font-size="20" font-weight="normal" font-style="normal" fill="#000" text-anchor="start" letter-spacing="0.55" word-spacing="-1.5">£0.15</text>
<text x="1463.6" y="703.8" font-family="Liberation Sans" font-size="20" font-weight="normal" font-style="normal" fill="#000" text-anchor="start" letter-spacing="0.55" word-spacing="-1.5">NO</text>
<path d="M1596 682 L1606 682 L1596 692 Z" stroke="none" stroke-width="2" fill="#388a27" />
<text x="1599.6" y="703.8" font-family="Liberation Sans" font-size="20" font-weight="normal" font-style="normal" fill="#000" text-anchor="start" letter-spacing="0.55" word-spacing="-1.5">2</text>
<path d="M1724 682 L1734 682 L1724 692 Z" stroke="none" stroke-width="2" fill="#388a27" />
<text x="1727.6" y="703.8" font-family="Liberation Sans" font-size="20" font-weight="normal" font-style="normal" fill="#000" text-anchor="start" letter-spacing="0.55" word-spacing="-1.5">0</text>
<text x="1843.6" y="703.8" font-family="Liberation Sans" font-size="20" font-weight="normal" font-style="normal" fill="#000" text-anchor="start" letter-spacing="0.55" word-spacing="-1.5">YES</text>
<path d="M1969 682 L1979 682 L1969 692 Z" stroke="none" stroke-width="2" fill="#388a27" />
<text x="1972.6" y="703.8" font-family="Liberation Sans" font-size="20" font-weight="normal" font-style="normal" fill="#000" text-anchor="start" letter-spacing="0.55" word-spacing="-1.5">100</text>
<path d="M2106 682 L2116 682 L2106 692 Z" stroke="none" stroke-width="2" fill="#388a27" />
<text x="2109.6" y="703.8" font-family="Liberation Sans" font-size="20" font-weight="normal" font-style="normal" fill="#000" text-anchor="start" letter-spacing="0.55" word-spacing="-1.5">0</text>
<path d="M2272 682 L2282 682 L2272 692 Z" stroke="none" stroke-width="2" fill="#388a27" />
<text x="2275.6" y="703.8" font-family="Liberation Sans" font-size="20" font-weight="normal" font-style="normal" fill="#000" text-anchor="start" letter-spacing="0.55" word-spacing="-1.5">0</text>
<path d="M2446 682 L2456 682 L2446 692 Z" stroke="none" stroke-width="2" fill="#388a27" />
<text x="2449.6" y="703.8" font-family="Liberation Sans" font-size="20" font-weight="normal" font-style="normal" fill="#000" text-anchor="start" letter-spacing="0.55" word-spacing="-1.5">0</text>
<text x="2634.6" y="703.8" font-family="Liberation Sans" font-size="20" font-weight="normal" font-style="normal" fill="#000" text-anchor="start" letter-spacing="0.55" word-spacing="-1.5">All</text>
<path d="M46 712 L56 712 L46 722 Z" stroke="none" stroke-width="2" fill="#388a27" />
<text x="50.7" y="733.8" font-family="Liberation Sans" font-size="20" font-weight="normal" font-style="normal" fill="#000" text-anchor="start" textLength="225.5" lengthAdjust="spacingAndGlyphs" >1729399826116938911</text>
<text x="653.6" y="733.8" font-family="Liberation Sans" font-size="20" font-weight="normal" font-style="normal" fill="#000" text-anchor="start" letter-spacing="0.55" word-spacing="-1.5">£2.00</text>
<path d="M794 712 L804 712 L794 722 Z" stroke="none" stroke-width="2" fill="#388a27" />
<text x="797.6" y="733.8" font-family="Liberation Sans" font-size="20" font-weight="normal" font-style="normal" fill="#000" text-anchor="start" letter-spacing="0.55" word-spacing="-1.5">115</text>
<text x="905.6" y="733.8" font-family="Liberation Sans" font-size="20" font-weight="normal" font-style="normal" fill="#000" text-anchor="start" letter-spacing="0.55" word-spacing="-1.5">Unavailable</text>
<text x="1049.6" y="733.8" font-family="Liberation Sans" font-size="20" font-weight="normal" font-style="normal" fill="#000" text-anchor="start" letter-spacing="0.55" word-spacing="-1.5">YES</text>
<path d="M1200 712 L1210 712 L1200 722 Z" stroke="none" stroke-width="2" fill="#388a27" />
<text x="1203.6" y="733.8" font-family="Liberation Sans" font-size="20" font-weight="normal" font-style="normal" fill="#000" text-anchor="start" letter-spacing="0.55" word-spacing="-1.5">1500</text>
<text x="1331.6" y="733.8" font-family="Liberation Sans" font-size="20" font-weight="normal" font-style="normal" fill="#000" text-anchor="start" letter-spacing="0.55" word-spacing="-1.5">£0.30</text>
<text x="1463.6" y="733.8" font-family="Liberation Sans" font-size="20" font-weight="normal" font-style="normal" fill="#000" text-anchor="start" letter-spacing="0.55" word-spacing="-1.5">NO</text>
<path d="M1596 712 L1606 712 L1596 722 Z" stroke="none" stroke-width="2" fill="#388a27" />
<text x="1599.6" y="733.8" font-family="Liberation Sans" font-size="20" font-weight="normal" font-style="normal" fill="#000" text-anchor="start" letter-spacing="0.55" word-spacing="-1.5">6</text>
<path d="M1724 712 L1734 712 L1724 722 Z" stroke="none" stroke-width="2" fill="#388a27" />
<text x="1727.6" y="733.8" font-family="Liberation Sans" font-size="20" font-weight="normal" font-style="normal" fill="#000" text-anchor="start" letter-spacing="0.55" word-spacing="-1.5">0</text>
<text x="1843.6" y="733.8" font-family="Liberation Sans" font-size="20" font-weight="normal" font-style="normal" fill="#000" text-anchor="start" letter-spacing="0.55" word-spacing="-1.5">NO</text>
<path d="M46 742 L56 742 L46 752 Z" stroke="none" stroke-width="2" fill="#388a27" />
<text x="50.7" y="763.8" font-family="Liberation Sans" font-size="20" font-weight="normal" font-style="normal" fill="#000" text-anchor="start" textLength="225.5" lengthAdjust="spacingAndGlyphs" >1729399845379476639</text>
<text x="653.6" y="763.8" font-family="Liberation Sans" font-size="20" font-weight="normal" font-style="normal" fill="#000" text-anchor="start" letter-spacing="0.55" word-spacing="-1.5">£0.01</text>
<path d="M794 742 L804 742 L794 752 Z" stroke="none" stroke-width="2" fill="#388a27" />
<text x="797.6" y="763.8" font-family="Liberation Sans" font-size="20" font-weight="normal" font-style="normal" fill="#000" text-anchor="start" letter-spacing="0.55" word-spacing="-1.5">1000</text>
<text x="905.6" y="763.8" font-family="Liberation Sans" font-size="20" font-weight="normal" font-style="normal" fill="#000" text-anchor="start" letter-spacing="0.55" word-spacing="-1.5">Unavailable</text>
<text x="1049.6" y="763.8" font-family="Liberation Sans" font-size="20" font-weight="normal" font-style="normal" fill="#000" text-anchor="start" letter-spacing="0.55" word-spacing="-1.5">YES</text>
<path d="M1200 742 L1210 742 L1200 752 Z" stroke="none" stroke-width="2" fill="#388a27" />
<text x="1203.6" y="763.8" font-family="Liberation Sans" font-size="20" font-weight="normal" font-style="normal" fill="#000" text-anchor="start" letter-spacing="0.55" word-spacing="-1.5">1100</text>
<text x="1331.6" y="763.8" font-family="Liberation Sans" font-size="20" font-weight="normal" font-style="normal" fill="#000" text-anchor="start" letter-spacing="0.55" word-spacing="-1.5">£0.00</text>
<text x="1463.6" y="763.8" font-family="Liberation Sans" font-size="20" font-weight="normal" font-style="normal" fill="#000" text-anchor="start" letter-spacing="0.55" word-spacing="-1.5">NO</text>
<path d="M1596 742 L1606 742 L1596 752 Z" stroke="none" stroke-width="2" fill="#388a27" />
<text x="1599.6" y="763.8" font-family="Liberation Sans" font-size="20" font-weight="normal" font-style="normal" fill="#000" text-anchor="start" letter-spacing="0.55" word-spacing="-1.5">2</text>
<path d="M1724 742 L1734 742 L1724 752 Z" stroke="none" stroke-width="2" fill="#388a27" />
<text x="1727.6" y="763.8" font-family="Liberation Sans" font-size="20" font-weight="normal" font-style="normal" fill="#000" text-anchor="start" letter-spacing="0.55" word-spacing="-1.5">0</text>
<text x="1843.6" y="763.8" font-family="Liberation Sans" font-size="20" font-weight="normal" font-style="normal" fill="#000" text-anchor="start" letter-spacing="0.55" word-spacing="-1.5">NO</text>
<path d="M46 772 L56 772 L46 782 Z" stroke="none" stroke-width="2" fill="#388a27" />
<text x="50.7" y="793.8" font-family="Liberation Sans" font-size="20" font-weight="normal" font-style="normal" fill="#000" text-anchor="start" textLength="225.5" lengthAdjust="spacingAndGlyphs" >1729399872950340767</text>
<text x="653.6" y="793.8" font-family="Liberation Sans" font-size="20" font-weight="normal" font-style="normal" fill="#000" text-anchor="start" letter-spacing="0.55" word-spacing="-1.5">£2.00</text>
<path d="M794 772 L804 772 L794 782 Z" stroke="none" stroke-width="2" fill="#388a27" />
<text x="797.6" y="793.8" font-family="Liberation Sans" font-size="20" font-weight="normal" font-style="normal" fill="#000" text-anchor="start" letter-spacing="0.55" word-spacing="-1.5">2466</text>
<text x="905.6" y="793.8" font-family="Liberation Sans" font-size="20" font-weight="normal" font-style="normal" fill="#000" text-anchor="start" letter-spacing="0.55" word-spacing="-1.5">Unavailable</text>
<text x="1049.6" y="793.8" font-family="Liberation Sans" font-size="20" font-weight="normal" font-style="normal" fill="#000" text-anchor="start" letter-spacing="0.55" word-spacing="-1.5">YES</text>
<path d="M1200 772 L1210 772 L1200 782 Z" stroke="none" stroke-width="2" fill="#388a27" />
<text x="1203.6" y="793.8" font-family="Liberation Sans" font-size="20" font-weight="normal" font-style="normal" fill="#000" text-anchor="start" letter-spacing="0.55" word-spacing="-1.5">1300</text>
<text x="1331.6" y="793.8" font-family="Liberation Sans" font-size="20" font-weight="normal" font-style="normal" fill="#000" text-anchor="start" letter-spacing="0.55" word-spacing="-1.5">£0.26</text>
<text x="1463.6" y="793.8" font-family="Liberation Sans" font-size="20" font-weight="normal" font-style="normal" fill="#000" text-anchor="start" letter-spacing="0.55" word-spacing="-1.5">NO</text>
<path d="M1596 772 L1606 772 L1596 782 Z" stroke="none" stroke-width="2" fill="#388a27" />
<text x="1599.6" y="793.8" font-family="Liberation Sans" font-size="20" font-weight="normal" font-style="normal" fill="#000" text-anchor="start" letter-spacing="0.55" word-spacing="-1.5">8</text>
<path d="M1724 772 L1734 772 L1724 782 Z" stroke="none" stroke-width="2" fill="#388a27" />
<text x="1727.6" y="793.8" font-family="Liberation Sans" font-size="20" font-weight="normal" font-style="normal" fill="#000" text-anchor="start" letter-spacing="0.55" word-spacing="-1.5">0</text>
<text x="1843.6" y="793.8" font-family="Liberation Sans" font-size="20" font-weight="normal" font-style="normal" fill="#000" text-anchor="start" letter-spacing="0.55" word-spacing="-1.5">NO</text>
<path d="M46 802 L56 802 L46 812 Z" stroke="none" stroke-width="2" fill="#388a27" />
<text x="50.7" y="823.8" font-family="Liberation Sans" font-size="20" font-weight="normal" font-style="normal" fill="#000" text-anchor="start" textLength="225.5" lengthAdjust="spacingAndGlyphs" >1729399873514146975</text>
<text x="653.6" y="823.8" font-family="Liberation Sans" font-size="20" font-weight="normal" font-style="normal" fill="#000" text-anchor="start" letter-spacing="0.55" word-spacing="-1.5">£2.00</text>
<path d="M794 802 L804 802 L794 812 Z" stroke="none" stroke-width="2" fill="#388a27" />
<text x="797.6" y="823.8" font-family="Liberation Sans" font-size="20" font-weight="normal" font-style="normal" fill="#000" text-anchor="start" letter-spacing="0.55" word-spacing="-1.5">1233</text>
<text x="905.6" y="823.8" font-family="Liberation Sans" font-size="20" font-weight="normal" font-style="normal" fill="#000" text-anchor="start" letter-spacing="0.55" word-spacing="-1.5">Unavailable</text>
<text x="1049.6" y="823.8" font-family="Liberation Sans" font-size="20" font-weight="normal" font-style="normal" fill="#000" text-anchor="start" letter-spacing="0.55" word-spacing="-1.5">YES</text>
<path d="M1200 802 L1210 802 L1200 812 Z" stroke="none" stroke-width="2" fill="#388a27" />
<text x="1203.6" y="823.8" font-family="Liberation Sans" font-size="20" font-weight="normal" font-style="normal" fill="#000" text-anchor="start" letter-spacing="0.55" word-spacing="-1.5">1100</text>
<text x="1331.6" y="823.8" font-family="Liberation Sans" font-size="20" font-weight="normal" font-style="normal" fill="#000" text-anchor="start" letter-spacing="0.55" word-spacing="-1.5">£0.22</text>
<text x="1463.6" y="823.8" font-family="Liberation Sans" font-size="20" font-weight="normal" font-style="normal" fill="#000" text-anchor="start" letter-spacing="0.55" word-spacing="-1.5">NO</text>
<path d="M1596 802 L1606 802 L1596 812 Z" stroke="none" stroke-width="2" fill="#388a27" />
<text x="1599.6" y="823.8" font-family="Liberation Sans" font-size="20" font-weight="normal" font-style="normal" fill="#000" text-anchor="start" letter-spacing="0.55" word-spacing="-1.5">5</text>
<path d="M1724 802 L1734 802 L1724 812 Z" stroke="none" stroke-width="2" fill="#388a27" />
<text x="1727.6" y="823.8" font-family="Liberation Sans" font-size="20" font-weight="normal" font-style="normal" fill="#000" text-anchor="start" letter-spacing="0.55" word-spacing="-1.5">0</text>
<text x="1843.6" y="823.8" font-family="Liberation Sans" font-size="20" font-weight="normal" font-style="normal" fill="#000" text-anchor="start" letter-spacing="0.55" word-spacing="-1.5">NO</text>
<path d="M46 832 L56 832 L46 842 Z" stroke="none" stroke-width="2" fill="#388a27" />
<text x="50.7" y="853.8" font-family="Liberation Sans" font-size="20" font-weight="normal" font-style="normal" fill="#000" text-anchor="start" textLength="225.5" lengthAdjust="spacingAndGlyphs" >1729399873544359071</text>
<text x="653.6" y="853.8" font-family="Liberation Sans" font-size="20" font-weight="normal" font-style="normal" fill="#000" text-anchor="start" letter-spacing="0.55" word-spacing="-1.5">£3.00</text>
<path d="M794 832 L804 832 L794 842 Z" stroke="none" stroke-width="2" fill="#388a27" />
<text x="797.6" y="853.8" font-family="Liberation Sans" font-size="20" font-weight="normal" font-style="normal" fill="#000" text-anchor="start" letter-spacing="0.55" word-spacing="-1.5">1111</text>
<text x="905.6" y="853.8" font-family="Liberation Sans" font-size="20" font-weight="normal" font-style="normal" fill="#000" text-anchor="start" letter-spacing="0.55" word-spacing="-1.5">Unavailable</text>
<text x="1049.6" y="853.8" font-family="Liberation Sans" font-size="20" font-weight="normal" font-style="normal" fill="#000" text-anchor="start" letter-spacing="0.55" word-spacing="-1.5">YES</text>
<path d="M1200 832 L1210 832 L1200 842 Z" stroke="none" stroke-width="2" fill="#388a27" />
<text x="1203.6" y="853.8" font-family="Liberation Sans" font-size="20" font-weight="normal" font-style="normal" fill="#000" text-anchor="start" letter-spacing="0.55" word-spacing="-1.5">1100</text>
<text x="1331.6" y="853.8" font-family="Liberation Sans" font-size="20" font-weight="normal" font-style="normal" fill="#000" text-anchor="start" letter-spacing="0.55" word-spacing="-1.5">£0.33</text>
<text x="1463.6" y="853.8" font-family="Liberation Sans" font-size="20" font-weight="normal" font-style="normal" fill="#000" text-anchor="start" letter-spacing="0.55" word-spacing="-1.5">NO</text>
<path d="M1596 832 L1606 832 L1596 842 Z" stroke="none" stroke-width="2" fill="#388a27" />
<text x="1599.6" y="853.8" font-family="Liberation Sans" font-size="20" font-weight="normal" font-style="normal" fill="#000" text-anchor="start" letter-spacing="0.55" word-spacing="-1.5">2</text>
<path d="M1724 832 L1734 832 L1724 842 Z" stroke="none" stroke-width="2" fill="#388a27" />
<text x="1727.6" y="853.8" font-family="Liberation Sans" font-size="20" font-weight="normal" font-style="normal" fill="#000" text-anchor="start" letter-spacing="0.55" word-spacing="-1.5">0</text>
<text x="1843.6" y="853.8" font-family="Liberation Sans" font-size="20" font-weight="normal" font-style="normal" fill="#000" text-anchor="start" letter-spacing="0.55" word-spacing="-1.5">NO</text>
<path d="M46 862 L56 862 L46 872 Z" stroke="none" stroke-width="2" fill="#388a27" />
<text x="50.7" y="883.8" font-family="Liberation Sans" font-size="20" font-weight="normal" font-style="normal" fill="#000" text-anchor="start" textLength="225.5" lengthAdjust="spacingAndGlyphs" >1729399929769135263</text>
<text x="653.6" y="883.8" font-family="Liberation Sans" font-size="20" font-weight="normal" font-style="normal" fill="#000" text-anchor="start" letter-spacing="0.55" word-spacing="-1.5">£549.31</text>
<path d="M794 862 L804 862 L794 872 Z" stroke="none" stroke-width="2" fill="#388a27" />
<text x="797.6" y="883.8" font-family="Liberation Sans" font-size="20" font-weight="normal" font-style="normal" fill="#000" text-anchor="start" letter-spacing="0.55" word-spacing="-1.5">0</text>
<text x="905.6" y="883.8" font-family="Liberation Sans" font-size="20" font-weight="normal" font-style="normal" fill="#000" text-anchor="start" letter-spacing="0.55" word-spacing="-1.5">Unavailable</text>
<text x="1049.6" y="883.8" font-family="Liberation Sans" font-size="20" font-weight="normal" font-style="normal" fill="#000" text-anchor="start" letter-spacing="0.55" word-spacing="-1.5">YES</text>
<path d="M1200 862 L1210 862 L1200 872 Z" stroke="none" stroke-width="2" fill="#388a27" />
<text x="1203.6" y="883.8" font-family="Liberation Sans" font-size="20" font-weight="normal" font-style="normal" fill="#000" text-anchor="start" letter-spacing="0.55" word-spacing="-1.5">1000</text>
<text x="1331.6" y="883.8" font-family="Liberation Sans" font-size="20" font-weight="normal" font-style="normal" fill="#000" text-anchor="start" letter-spacing="0.55" word-spacing="-1.5">£54.93</text>
<text x="1463.6" y="883.8" font-family="Liberation Sans" font-size="20" font-weight="normal" font-style="normal" fill="#000" text-anchor="start" letter-spacing="0.55" word-spacing="-1.5">NO</text>
<path d="M1596 862 L1606 862 L1596 872 Z" stroke="none" stroke-width="2" fill="#388a27" />
<text x="1599.6" y="883.8" font-family="Liberation Sans" font-size="20" font-weight="normal" font-style="normal" fill="#000" text-anchor="start" letter-spacing="0.55" word-spacing="-1.5">0</text>
<path d="M1724 862 L1734 862 L1724 872 Z" stroke="none" stroke-width="2" fill="#388a27" />
<text x="1727.6" y="883.8" font-family="Liberation Sans" font-size="20" font-weight="normal" font-style="normal" fill="#000" text-anchor="start" letter-spacing="0.55" word-spacing="-1.5">0</text>
<text x="1843.6" y="883.8" font-family="Liberation Sans" font-size="20" font-weight="normal" font-style="normal" fill="#000" text-anchor="start" letter-spacing="0.55" word-spacing="-1.5">NO</text>
<path d="M46 892 L56 892 L46 902 Z" stroke="none" stroke-width="2" fill="#388a27" />
<text x="50.7" y="913.8" font-family="Liberation Sans" font-size="20" font-weight="normal" font-style="normal" fill="#000" text-anchor="start" textLength="225.5" lengthAdjust="spacingAndGlyphs" >1729399929790565535</text>
<text x="653.6" y="913.8" font-family="Liberation Sans" font-size="20" font-weight="normal" font-style="normal" fill="#000" text-anchor="start" letter-spacing="0.55" word-spacing="-1.5">£525.77</text>
<path d="M794 892 L804 892 L794 902 Z" stroke="none" stroke-width="2" fill="#388a27" />
<text x="797.6" y="913.8" font-family="Liberation Sans" font-size="20" font-weight="normal" font-style="normal" fill="#000" text-anchor="start" letter-spacing="0.55" word-spacing="-1.5">21</text>
<text x="905.6" y="913.8" font-family="Liberation Sans" font-size="20" font-weight="normal" font-style="normal" fill="#000" text-anchor="start" letter-spacing="0.55" word-spacing="-1.5">Unavailable</text>
<text x="1049.6" y="913.8" font-family="Liberation Sans" font-size="20" font-weight="normal" font-style="normal" fill="#000" text-anchor="start" letter-spacing="0.55" word-spacing="-1.5">YES</text>
<path d="M1200 892 L1210 892 L1200 902 Z" stroke="none" stroke-width="2" fill="#388a27" />
<text x="1203.6" y="913.8" font-family="Liberation Sans" font-size="20" font-weight="normal" font-style="normal" fill="#000" text-anchor="start" letter-spacing="0.55" word-spacing="-1.5">1500</text>
<text x="1331.6" y="913.8" font-family="Liberation Sans" font-size="20" font-weight="normal" font-style="normal" fill="#000" text-anchor="start" letter-spacing="0.55" word-spacing="-1.5">£78.87</text>
<text x="1463.6" y="913.8" font-family="Liberation Sans" font-size="20" font-weight="normal" font-style="normal" fill="#000" text-anchor="start" letter-spacing="0.55" word-spacing="-1.5">NO</text>
<path d="M1596 892 L1606 892 L1596 902 Z" stroke="none" stroke-width="2" fill="#388a27" />
<text x="1599.6" y="913.8" font-family="Liberation Sans" font-size="20" font-weight="normal" font-style="normal" fill="#000" text-anchor="start" letter-spacing="0.55" word-spacing="-1.5">5</text>
<path d="M1724 892 L1734 892 L1724 902 Z" stroke="none" stroke-width="2" fill="#388a27" />
<text x="1727.6" y="913.8" font-family="Liberation Sans" font-size="20" font-weight="normal" font-style="normal" fill="#000" text-anchor="start" letter-spacing="0.55" word-spacing="-1.5">1</text>
<text x="1843.6" y="913.8" font-family="Liberation Sans" font-size="20" font-weight="normal" font-style="normal" fill="#000" text-anchor="start" letter-spacing="0.55" word-spacing="-1.5">NO</text>
<path d="M46 922 L56 922 L46 932 Z" stroke="none" stroke-width="2" fill="#388a27" />
<text x="50.7" y="943.8" font-family="Liberation Sans" font-size="20" font-weight="normal" font-style="normal" fill="#000" text-anchor="start" textLength="225.5" lengthAdjust="spacingAndGlyphs" >1729399936697994399</text>
<text x="653.6" y="943.8" font-family="Liberation Sans" font-size="20" font-weight="normal" font-style="normal" fill="#000" text-anchor="start" letter-spacing="0.55" word-spacing="-1.5">£2.00</text>
<path d="M794 922 L804 922 L794 932 Z" stroke="none" stroke-width="2" fill="#388a27" />
<text x="797.6" y="943.8" font-family="Liberation Sans" font-size="20" font-weight="normal" font-style="normal" fill="#000" text-anchor="start" letter-spacing="0.55" word-spacing="-1.5">1110</text>
<text x="905.6" y="943.8" font-family="Liberation Sans" font-size="20" font-weight="normal" font-style="normal" fill="#000" text-anchor="start" letter-spacing="0.55" word-spacing="-1.5">Unavailable</text>
<text x="1049.6" y="943.8" font-family="Liberation Sans" font-size="20" font-weight="normal" font-style="normal" fill="#000" text-anchor="start" letter-spacing="0.55" word-spacing="-1.5">YES</text>
<path d="M1200 922 L1210 922 L1200 932 Z" stroke="none" stroke-width="2" fill="#388a27" />
<text x="1203.6" y="943.8" font-family="Liberation Sans" font-size="20" font-weight="normal" font-style="normal" fill="#000" text-anchor="start" letter-spacing="0.55" word-spacing="-1.5">1100</text>
<text x="1331.6" y="943.8" font-family="Liberation Sans" font-size="20" font-weight="normal" font-style="normal" fill="#000" text-anchor="start" letter-spacing="0.55" word-spacing="-1.5">£0.22</text>
<text x="1463.6" y="943.8" font-family="Liberation Sans" font-size="20" font-weight="normal" font-style="normal" fill="#000" text-anchor="start" letter-spacing="0.55" word-spacing="-1.5">YES</text>
<path d="M1596 922 L1606 922 L1596 932 Z" stroke="none" stroke-width="2" fill="#388a27" />
<text x="1599.6" y="943.8" font-family="Liberation Sans" font-size="20" font-weight="normal" font-style="normal" fill="#000" text-anchor="start" letter-spacing="0.55" word-spacing="-1.5">1</text>
<path d="M1724 922 L1734 922 L1724 932 Z" stroke="none" stroke-width="2" fill="#388a27" />
<text x="1727.6" y="943.8" font-family="Liberation Sans" font-size="20" font-weight="normal" font-style="normal" fill="#000" text-anchor="start" letter-spacing="0.55" word-spacing="-1.5">0</text>
<text x="1843.6" y="943.8" font-family="Liberation Sans" font-size="20" font-weight="normal" font-style="normal" fill="#000" text-anchor="start" letter-spacing="0.55" word-spacing="-1.5">NO</text>
<path d="M46 952 L56 952 L46 962 Z" stroke="none" stroke-width="2" fill="#388a27" />
<text x="50.7" y="973.8" font-family="Liberation Sans" font-size="20" font-weight="normal" font-style="normal" fill="#000" text-anchor="start" textLength="225.5" lengthAdjust="spacingAndGlyphs" >1729399976584449183</text>
<text x="653.6" y="973.8" font-family="Liberation Sans" font-size="20" font-weight="normal" font-style="normal" fill="#000" text-anchor="start" letter-spacing="0.55" word-spacing="-1.5">£12.00</text>
<path d="M794 952 L804 952 L794 962 Z" stroke="none" stroke-width="2" fill="#388a27" />
<text x="797.6" y="973.8" font-family="Liberation Sans" font-size="20" font-weight="normal" font-style="normal" fill="#000" text-anchor="start" letter-spacing="0.55" word-spacing="-1.5">211</text>
<text x="905.6" y="973.8" font-family="Liberation Sans" font-size="20" font-weight="normal" font-style="normal" fill="#000" text-anchor="start" letter-spacing="0.55" word-spacing="-1.5">Unavailable</text>
<text x="1049.6" y="973.8" font-family="Liberation Sans" font-size="20" font-weight="normal" font-style="normal" fill="#000" text-anchor="start" letter-spacing="0.55" word-spacing="-1.5">YES</text>
<path d="M1200 952 L1210 952 L1200 962 Z" stroke="none" stroke-width="2" fill="#388a27" />
<text x="1203.6" y="973.8" font-family="Liberation Sans" font-size="20" font-weight="normal" font-style="normal" fill="#000" text-anchor="start" letter-spacing="0.55" word-spacing="-1.5">1500</text>
<text x="1331.6" y="973.8" font-family="Liberation Sans" font-size="20" font-weight="normal" font-style="normal" fill="#000" text-anchor="start" letter-spacing="0.55" word-spacing="-1.5">£1.80</text>
<text x="1463.6" y="973.8" font-family="Liberation Sans" font-size="20" font-weight="normal" font-style="normal" fill="#000" text-anchor="start" letter-spacing="0.55" word-spacing="-1.5">NO</text>
<path d="M1596 952 L1606 952 L1596 962 Z" stroke="none" stroke-width="2" fill="#388a27" />
<text x="1599.6" y="973.8" font-family="Liberation Sans" font-size="20" font-weight="normal" font-style="normal" fill="#000" text-anchor="start" letter-spacing="0.55" word-spacing="-1.5">8</text>
<path d="M1724 952 L1734 952 L1724 962 Z" stroke="none" stroke-width="2" fill="#388a27" />
<text x="1727.6" y="973.8" font-family="Liberation Sans" font-size="20" font-weight="normal" font-style="normal" fill="#000" text-anchor="start" letter-spacing="0.55" word-spacing="-1.5">1</text>
<text x="1843.6" y="973.8" font-family="Liberation Sans" font-size="20" font-weight="normal" font-style="normal" fill="#000" text-anchor="start" letter-spacing="0.55" word-spacing="-1.5">NO</text>
<path d="M46 982 L56 982 L46 992 Z" stroke="none" stroke-width="2" fill="#388a27" />
<text x="50.7" y="1003.8" font-family="Liberation Sans" font-size="20" font-weight="normal" font-style="normal" fill="#000" text-anchor="start" textLength="225.5" lengthAdjust="spacingAndGlyphs" >1729400010331753631</text>
<text x="653.6" y="1003.8" font-family="Liberation Sans" font-size="20" font-weight="normal" font-style="normal" fill="#000" text-anchor="start" letter-spacing="0.55" word-spacing="-1.5">£9.14</text>
<path d="M794 982 L804 982 L794 992 Z" stroke="none" stroke-width="2" fill="#388a27" />
<text x="797.6" y="1003.8" font-family="Liberation Sans" font-size="20" font-weight="normal" font-style="normal" fill="#000" text-anchor="start" letter-spacing="0.55" word-spacing="-1.5">99999</text>
<text x="905.6" y="1003.8" font-family="Liberation Sans" font-size="20" font-weight="normal" font-style="normal" fill="#000" text-anchor="start" letter-spacing="0.55" word-spacing="-1.5">Unavailable</text>
<text x="1049.6" y="1003.8" font-family="Liberation Sans" font-size="20" font-weight="normal" font-style="normal" fill="#000" text-anchor="start" letter-spacing="0.55" word-spacing="-1.5">NO</text>
<text x="1463.6" y="1003.8" font-family="Liberation Sans" font-size="20" font-weight="normal" font-style="normal" fill="#000" text-anchor="start" letter-spacing="0.55" word-spacing="-1.5">NO</text>
<text x="1843.6" y="1003.8" font-family="Liberation Sans" font-size="20" font-weight="normal" font-style="normal" fill="#000" text-anchor="start" letter-spacing="0.55" word-spacing="-1.5">NO</text>
<path d="M46 1012 L56 1012 L46 1022 Z" stroke="none" stroke-width="2" fill="#388a27" />
<text x="50.7" y="1033.8" font-family="Liberation Sans" font-size="20" font-weight="normal" font-style="normal" fill="#000" text-anchor="start" textLength="225.5" lengthAdjust="spacingAndGlyphs" >1729400010341584031</text>
<text x="653.6" y="1033.8" font-family="Liberation Sans" font-size="20" font-weight="normal" font-style="normal" fill="#000" text-anchor="start" letter-spacing="0.55" word-spacing="-1.5">£9.14</text>
<path d="M794 1012 L804 1012 L794 1022 Z" stroke="none" stroke-width="2" fill="#388a27" />
<text x="797.6" y="1033.8" font-family="Liberation Sans" font-size="20" font-weight="normal" font-style="normal" fill="#000" text-anchor="start" letter-spacing="0.55" word-spacing="-1.5">99999</text>
<text x="905.6" y="1033.8" font-family="Liberation Sans" font-size="20" font-weight="normal" font-style="normal" fill="#000" text-anchor="start" letter-spacing="0.55" word-spacing="-1.5">Unavailable</text>
<text x="1049.6" y="1033.8" font-family="Liberation Sans" font-size="20" font-weight="normal" font-style="normal" fill="#000" text-anchor="start" letter-spacing="0.55" word-spacing="-1.5">YES</text>
<text x="1463.6" y="1033.8" font-family="Liberation Sans" font-size="20" font-weight="normal" font-style="normal" fill="#000" text-anchor="start" letter-spacing="0.55" word-spacing="-1.5">NO</text>
<text x="1843.6" y="1033.8" font-family="Liberation Sans" font-size="20" font-weight="normal" font-style="normal" fill="#000" text-anchor="start" letter-spacing="0.55" word-spacing="-1.5">NO</text>
<path d="M46 1042 L56 1042 L46 1052 Z" stroke="none" stroke-width="2" fill="#388a27" />
<text x="50.7" y="1063.8" font-family="Liberation Sans" font-size="20" font-weight="normal" font-style="normal" fill="#000" text-anchor="start" textLength="225.5" lengthAdjust="spacingAndGlyphs" >1729400011758144671</text>
<text x="653.6" y="1063.8" font-family="Liberation Sans" font-size="20" font-weight="normal" font-style="normal" fill="#000" text-anchor="start" letter-spacing="0.55" word-spacing="-1.5">£9.14</text>
<path d="M794 1042 L804 1042 L794 1052 Z" stroke="none" stroke-width="2" fill="#388a27" />
<text x="797.6" y="1063.8" font-family="Liberation Sans" font-size="20" font-weight="normal" font-style="normal" fill="#000" text-anchor="start" letter-spacing="0.55" word-spacing="-1.5">99999</text>
<text x="905.6" y="1063.8" font-family="Liberation Sans" font-size="20" font-weight="normal" font-style="normal" fill="#000" text-anchor="start" letter-spacing="0.55" word-spacing="-1.5">Unavailable</text>
<text x="1049.6" y="1063.8" font-family="Liberation Sans" font-size="20" font-weight="normal" font-style="normal" fill="#000" text-anchor="start" letter-spacing="0.55" word-spacing="-1.5">NO</text>
<text x="1463.6" y="1063.8" font-family="Liberation Sans" font-size="20" font-weight="normal" font-style="normal" fill="#000" text-anchor="start" letter-spacing="0.55" word-spacing="-1.5">NO</text>
<text x="1843.6" y="1063.8" font-family="Liberation Sans" font-size="20" font-weight="normal" font-style="normal" fill="#000" text-anchor="start" letter-spacing="0.55" word-spacing="-1.5">NO</text>
<path d="M46 1072 L56 1072 L46 1082 Z" stroke="none" stroke-width="2" fill="#388a27" />
<text x="50.7" y="1093.8" font-family="Liberation Sans" font-size="20" font-weight="normal" font-style="normal" fill="#000" text-anchor="start" textLength="225.5" lengthAdjust="spacingAndGlyphs" >1729400055500737695</text>
<text x="653.6" y="1093.8" font-family="Liberation Sans" font-size="20" font-weight="normal" font-style="normal" fill="#000" text-anchor="start" letter-spacing="0.55" word-spacing="-1.5">£549.31</text>
<path d="M794 1072 L804 1072 L794 1082 Z" stroke="none" stroke-width="2" fill="#388a27" />
<text x="797.6" y="1093.8" font-family="Liberation Sans" font-size="20" font-weight="normal" font-style="normal" fill="#000" text-anchor="start" letter-spacing="0.55" word-spacing="-1.5">2229</text>
<text x="905.6" y="1093.8" font-family="Liberation Sans" font-size="20" font-weight="normal" font-style="normal" fill="#000" text-anchor="start" letter-spacing="0.55" word-spacing="-1.5">Unavailable</text>
<text x="1049.6" y="1093.8" font-family="Liberation Sans" font-size="20" font-weight="normal" font-style="normal" fill="#000" text-anchor="start" letter-spacing="0.55" word-spacing="-1.5">YES</text>
<path d="M1200 1072 L1210 1072 L1200 1082 Z" stroke="none" stroke-width="2" fill="#388a27" />
<text x="1203.6" y="1093.8" font-family="Liberation Sans" font-size="20" font-weight="normal" font-style="normal" fill="#000" text-anchor="start" letter-spacing="0.55" word-spacing="-1.5">1100</text>
<text x="1331.6" y="1093.8" font-family="Liberation Sans" font-size="20" font-weight="normal" font-style="normal" fill="#000" text-anchor="start" letter-spacing="0.55" word-spacing="-1.5">£60.42</text>
<text x="1463.6" y="1093.8" font-family="Liberation Sans" font-size="20" font-weight="normal" font-style="normal" fill="#000" text-anchor="start" letter-spacing="0.55" word-spacing="-1.5">NO</text>
<path d="M1596 1072 L1606 1072 L1596 1082 Z" stroke="none" stroke-width="2" fill="#388a27" />
<text x="1599.6" y="1093.8" font-family="Liberation Sans" font-size="20" font-weight="normal" font-style="normal" fill="#000" text-anchor="start" letter-spacing="0.55" word-spacing="-1.5">2</text>
<path d="M1724 1072 L1734 1072 L1724 1082 Z" stroke="none" stroke-width="2" fill="#388a27" />
<text x="1727.6" y="1093.8" font-family="Liberation Sans" font-size="20" font-weight="normal" font-style="normal" fill="#000" text-anchor="start" letter-spacing="0.55" word-spacing="-1.5">0</text>
<text x="1843.6" y="1093.8" font-family="Liberation Sans" font-size="20" font-weight="normal" font-style="normal" fill="#000" text-anchor="start" letter-spacing="0.55" word-spacing="-1.5">NO</text>
<path d="M46 1102 L56 1102 L46 1112 Z" stroke="none" stroke-width="2" fill="#388a27" />
<text x="50.7" y="1123.8" font-family="Liberation Sans" font-size="20" font-weight="normal" font-style="normal" fill="#000" text-anchor="start" textLength="225.5" lengthAdjust="spacingAndGlyphs" >1729400060882095263</text>
<text x="653.6" y="1123.8" font-family="Liberation Sans" font-size="20" font-weight="normal" font-style="normal" fill="#000" text-anchor="start" letter-spacing="0.55" word-spacing="-1.5">£549.31</text>
<path d="M794 1102 L804 1102 L794 1112 Z" stroke="none" stroke-width="2" fill="#388a27" />
<text x="797.6" y="1123.8" font-family="Liberation Sans" font-size="20" font-weight="normal" font-style="normal" fill="#000" text-anchor="start" letter-spacing="0.55" word-spacing="-1.5">2432</text>
<text x="905.6" y="1123.8" font-family="Liberation Sans" font-size="20" font-weight="normal" font-style="normal" fill="#000" text-anchor="start" letter-spacing="0.55" word-spacing="-1.5">Unavailable</text>
<text x="1049.6" y="1123.8" font-family="Liberation Sans" font-size="20" font-weight="normal" font-style="normal" fill="#000" text-anchor="start" letter-spacing="0.55" word-spacing="-1.5">YES</text>
<path d="M1200 1102 L1210 1102 L1200 1112 Z" stroke="none" stroke-width="2" fill="#388a27" />
<text x="1203.6" y="1123.8" font-family="Liberation Sans" font-size="20" font-weight="normal" font-style="normal" fill="#000" text-anchor="start" letter-spacing="0.55" word-spacing="-1.5">1100</text>
<text x="1331.6" y="1123.8" font-family="Liberation Sans" font-size="20" font-weight="normal" font-style="normal" fill="#000" text-anchor="start" letter-spacing="0.55" word-spacing="-1.5">£60.42</text>
<text x="1463.6" y="1123.8" font-family="Liberation Sans" font-size="20" font-weight="normal" font-style="normal" fill="#000" text-anchor="start" letter-spacing="0.55" word-spacing="-1.5">NO</text>
<path d="M1596 1102 L1606 1102 L1596 1112 Z" stroke="none" stroke-width="2" fill="#388a27" />
<text x="1599.6" y="1123.8" font-family="Liberation Sans" font-size="20" font-weight="normal" font-style="normal" fill="#000" text-anchor="start" letter-spacing="0.55" word-spacing="-1.5">2</text>
<path d="M1724 1102 L1734 1102 L1724 1112 Z" stroke="none" stroke-width="2" fill="#388a27" />
<text x="1727.6" y="1123.8" font-family="Liberation Sans" font-size="20" font-weight="normal" font-style="normal" fill="#000" text-anchor="start" letter-spacing="0.55" word-spacing="-1.5">0</text>
<text x="1843.6" y="1123.8" font-family="Liberation Sans" font-size="20" font-weight="normal" font-style="normal" fill="#000" text-anchor="start" letter-spacing="0.55" word-spacing="-1.5">NO</text>
<path d="M46 1132 L56 1132 L46 1142 Z" stroke="none" stroke-width="2" fill="#388a27" />
<text x="50.7" y="1153.8" font-family="Liberation Sans" font-size="20" font-weight="normal" font-style="normal" fill="#000" text-anchor="start" textLength="225.5" lengthAdjust="spacingAndGlyphs" >1729400098482392223</text>
<text x="653.6" y="1153.8" font-family="Liberation Sans" font-size="20" font-weight="normal" font-style="normal" fill="#000" text-anchor="start" letter-spacing="0.55" word-spacing="-1.5">£162.00</text>
<path d="M794 1132 L804 1132 L794 1142 Z" stroke="none" stroke-width="2" fill="#388a27" />
<text x="797.6" y="1153.8" font-family="Liberation Sans" font-size="20" font-weight="normal" font-style="normal" fill="#000" text-anchor="start" letter-spacing="0.55" word-spacing="-1.5">3599964</text>
<text x="905.6" y="1153.8" font-family="Liberation Sans" font-size="20" font-weight="normal" font-style="normal" fill="#000" text-anchor="start" letter-spacing="0.55" word-spacing="-1.5">Available</text>
<text x="1049.6" y="1153.8" font-family="Liberation Sans" font-size="20" font-weight="normal" font-style="normal" fill="#000" text-anchor="start" letter-spacing="0.55" word-spacing="-1.5">YES</text>
<path d="M1200 1132 L1210 1132 L1200 1142 Z" stroke="none" stroke-width="2" fill="#388a27" />
<text x="1203.6" y="1153.8" font-family="Liberation Sans" font-size="20" font-weight="normal" font-style="normal" fill="#000" text-anchor="start" letter-spacing="0.55" word-spacing="-1.5">1100</text>
<text x="1331.6" y="1153.8" font-family="Liberation Sans" font-size="20" font-weight="normal" font-style="normal" fill="#000" text-anchor="start" letter-spacing="0.55" word-spacing="-1.5">£17.82</text>
<text x="1463.6" y="1153.8" font-family="Liberation Sans" font-size="20" font-weight="normal" font-style="normal" fill="#000" text-anchor="start" letter-spacing="0.55" word-spacing="-1.5">NO</text>
<path d="M1596 1132 L1606 1132 L1596 1142 Z" stroke="none" stroke-width="2" fill="#388a27" />
<text x="1599.6" y="1153.8" font-family="Liberation Sans" font-size="20" font-weight="normal" font-style="normal" fill="#000" text-anchor="start" letter-spacing="0.55" word-spacing="-1.5">2</text>
<path d="M1724 1132 L1734 1132 L1724 1142 Z" stroke="none" stroke-width="2" fill="#388a27" />
<text x="1727.6" y="1153.8" font-family="Liberation Sans" font-size="20" font-weight="normal" font-style="normal" fill="#000" text-anchor="start" letter-spacing="0.55" word-spacing="-1.5">0</text>
<text x="1843.6" y="1153.8" font-family="Liberation Sans" font-size="20" font-weight="normal" font-style="normal" fill="#000" text-anchor="start" letter-spacing="0.55" word-spacing="-1.5">NO</text>
<path d="M46 1162 L56 1162 L46 1172 Z" stroke="none" stroke-width="2" fill="#388a27" />
<text x="50.7" y="1183.8" font-family="Liberation Sans" font-size="20" font-weight="normal" font-style="normal" fill="#000" text-anchor="start" textLength="225.5" lengthAdjust="spacingAndGlyphs" >1729400551767510175</text>
<text x="653.6" y="1183.8" font-family="Liberation Sans" font-size="20" font-weight="normal" font-style="normal" fill="#000" text-anchor="start" letter-spacing="0.55" word-spacing="-1.5">£29.17</text>
<path d="M794 1162 L804 1162 L794 1172 Z" stroke="none" stroke-width="2" fill="#388a27" />
<text x="797.6" y="1183.8" font-family="Liberation Sans" font-size="20" font-weight="normal" font-style="normal" fill="#000" text-anchor="start" letter-spacing="0.55" word-spacing="-1.5">199998</text>
<text x="905.6" y="1183.8" font-family="Liberation Sans" font-size="20" font-weight="normal" font-style="normal" fill="#000" text-anchor="start" letter-spacing="0.55" word-spacing="-1.5">Unavailable</text>
<text x="1049.6" y="1183.8" font-family="Liberation Sans" font-size="20" font-weight="normal" font-style="normal" fill="#000" text-anchor="start" letter-spacing="0.55" word-spacing="-1.5">NO</text>
<text x="1463.6" y="1183.8" font-family="Liberation Sans" font-size="20" font-weight="normal" font-style="normal" fill="#000" text-anchor="start" letter-spacing="0.55" word-spacing="-1.5">NO</text>
<text x="1843.6" y="1183.8" font-family="Liberation Sans" font-size="20" font-weight="normal" font-style="normal" fill="#000" text-anchor="start" letter-spacing="0.55" word-spacing="-1.5">NO</text>
<path d="M46 1192 L56 1192 L46 1202 Z" stroke="none" stroke-width="2" fill="#388a27" />
<text x="50.7" y="1213.8" font-family="Liberation Sans" font-size="20" font-weight="normal" font-style="normal" fill="#000" text-anchor="start" textLength="225.5" lengthAdjust="spacingAndGlyphs" >1729400611059305631</text>
<text x="653.6" y="1213.8" font-family="Liberation Sans" font-size="20" font-weight="normal" font-style="normal" fill="#000" text-anchor="start" letter-spacing="0.55" word-spacing="-1.5">£150.00</text>
<path d="M794 1192 L804 1192 L794 1202 Z" stroke="none" stroke-width="2" fill="#388a27" />
<text x="797.6" y="1213.8" font-family="Liberation Sans" font-size="20" font-weight="normal" font-style="normal" fill="#000" text-anchor="start" letter-spacing="0.55" word-spacing="-1.5">299997</text>
<text x="905.6" y="1213.8" font-family="Liberation Sans" font-size="20" font-weight="normal" font-style="normal" fill="#000" text-anchor="start" letter-spacing="0.55" word-spacing="-1.5">Unavailable</text>
<text x="1049.6" y="1213.8" font-family="Liberation Sans" font-size="20" font-weight="normal" font-style="normal" fill="#000" text-anchor="start" letter-spacing="0.55" word-spacing="-1.5">NO</text>
<text x="1463.6" y="1213.8" font-family="Liberation Sans" font-size="20" font-weight="normal" font-style="normal" fill="#000" text-anchor="start" letter-spacing="0.55" word-spacing="-1.5">NO</text>
<text x="1843.6" y="1213.8" font-family="Liberation Sans" font-size="20" font-weight="normal" font-style="normal" fill="#000" text-anchor="start" letter-spacing="0.55" word-spacing="-1.5">NO</text>
<path d="M46 1222 L56 1222 L46 1232 Z" stroke="none" stroke-width="2" fill="#388a27" />
<text x="50.7" y="1243.8" font-family="Liberation Sans" font-size="20" font-weight="normal" font-style="normal" fill="#000" text-anchor="start" textLength="225.5" lengthAdjust="spacingAndGlyphs" >1729400616976288927</text>
<text x="653.6" y="1243.8" font-family="Liberation Sans" font-size="20" font-weight="normal" font-style="normal" fill="#000" text-anchor="start" letter-spacing="0.55" word-spacing="-1.5">£28.65</text>
<path d="M794 1222 L804 1222 L794 1232 Z" stroke="none" stroke-width="2" fill="#388a27" />
<text x="797.6" y="1243.8" font-family="Liberation Sans" font-size="20" font-weight="normal" font-style="normal" fill="#000" text-anchor="start" letter-spacing="0.55" word-spacing="-1.5">299997</text>
<text x="905.6" y="1243.8" font-family="Liberation Sans" font-size="20" font-weight="normal" font-style="normal" fill="#000" text-anchor="start" letter-spacing="0.55" word-spacing="-1.5">Unavailable</text>
<text x="1049.6" y="1243.8" font-family="Liberation Sans" font-size="20" font-weight="normal" font-style="normal" fill="#000" text-anchor="start" letter-spacing="0.55" word-spacing="-1.5">NO</text>
<text x="1463.6" y="1243.8" font-family="Liberation Sans" font-size="20" font-weight="normal" font-style="normal" fill="#000" text-anchor="start" letter-spacing="0.55" word-spacing="-1.5">NO</text>
<text x="1843.6" y="1243.8" font-family="Liberation Sans" font-size="20" font-weight="normal" font-style="normal" fill="#000" text-anchor="start" letter-spacing="0.55" word-spacing="-1.5">NO</text>
<path d="M46 1252 L56 1252 L46 1262 Z" stroke="none" stroke-width="2" fill="#388a27" />
<text x="50.7" y="1273.8" font-family="Liberation Sans" font-size="20" font-weight="normal" font-style="normal" fill="#000" text-anchor="start" textLength="225.5" lengthAdjust="spacingAndGlyphs" >1729400617188953247</text>
<text x="653.6" y="1273.8" font-family="Liberation Sans" font-size="20" font-weight="normal" font-style="normal" fill="#000" text-anchor="start" letter-spacing="0.55" word-spacing="-1.5">£28.65</text>
<path d="M794 1252 L804 1252 L794 1262 Z" stroke="none" stroke-width="2" fill="#388a27" />
<text x="797.6" y="1273.8" font-family="Liberation Sans" font-size="20" font-weight="normal" font-style="normal" fill="#000" text-anchor="start" letter-spacing="0.55" word-spacing="-1.5">99999</text>
<text x="905.6" y="1273.8" font-family="Liberation Sans" font-size="20" font-weight="normal" font-style="normal" fill="#000" text-anchor="start" letter-spacing="0.55" word-spacing="-1.5">Unavailable</text>
<text x="1049.6" y="1273.8" font-family="Liberation Sans" font-size="20" font-weight="normal" font-style="normal" fill="#000" text-anchor="start" letter-spacing="0.55" word-spacing="-1.5">NO</text>
<text x="1463.6" y="1273.8" font-family="Liberation Sans" font-size="20" font-weight="normal" font-style="normal" fill="#000" text-anchor="start" letter-spacing="0.55" word-spacing="-1.5">NO</text>
<text x="1843.6" y="1273.8" font-family="Liberation Sans" font-size="20" font-weight="normal" font-style="normal" fill="#000" text-anchor="start" letter-spacing="0.55" word-spacing="-1.5">NO</text>
<path d="M46 1282 L56 1282 L46 1292 Z" stroke="none" stroke-width="2" fill="#388a27" />
<text x="50.7" y="1303.8" font-family="Liberation Sans" font-size="20" font-weight="normal" font-style="normal" fill="#000" text-anchor="start" textLength="225.5" lengthAdjust="spacingAndGlyphs" >1729400639604690079</text>
<text x="653.6" y="1303.8" font-family="Liberation Sans" font-size="20" font-weight="normal" font-style="normal" fill="#000" text-anchor="start" letter-spacing="0.55" word-spacing="-1.5">£28.65</text>
<path d="M794 1282 L804 1282 L794 1292 Z" stroke="none" stroke-width="2" fill="#388a27" />
<text x="797.6" y="1303.8" font-family="Liberation Sans" font-size="20" font-weight="normal" font-style="normal" fill="#000" text-anchor="start" letter-spacing="0.55" word-spacing="-1.5">198</text>
<text x="905.6" y="1303.8" font-family="Liberation Sans" font-size="20" font-weight="normal" font-style="normal" fill="#000" text-anchor="start" letter-spacing="0.55" word-spacing="-1.5">Unavailable</text>
<text x="1049.6" y="1303.8" font-family="Liberation Sans" font-size="20" font-weight="normal" font-style="normal" fill="#000" text-anchor="start" letter-spacing="0.55" word-spacing="-1.5">YES</text>
<path d="M1200 1282 L1210 1282 L1200 1292 Z" stroke="none" stroke-width="2" fill="#388a27" />
<text x="1203.6" y="1303.8" font-family="Liberation Sans" font-size="20" font-weight="normal" font-style="normal" fill="#000" text-anchor="start" letter-spacing="0.55" word-spacing="-1.5">1000</text>
<text x="1331.6" y="1303.8" font-family="Liberation Sans" font-size="20" font-weight="normal" font-style="normal" fill="#000" text-anchor="start" letter-spacing="0.55" word-spacing="-1.5">£2.87</text>
<text x="1463.6" y="1303.8" font-family="Liberation Sans" font-size="20" font-weight="normal" font-style="normal" fill="#000" text-anchor="start" letter-spacing="0.55" word-spacing="-1.5">NO</text>
<path d="M1596 1282 L1606 1282 L1596 1292 Z" stroke="none" stroke-width="2" fill="#388a27" />
<text x="1599.6" y="1303.8" font-family="Liberation Sans" font-size="20" font-weight="normal" font-style="normal" fill="#000" text-anchor="start" letter-spacing="0.55" word-spacing="-1.5">3</text>
<path d="M1724 1282 L1734 1282 L1724 1292 Z" stroke="none" stroke-width="2" fill="#388a27" />
<text x="1727.6" y="1303.8" font-family="Liberation Sans" font-size="20" font-weight="normal" font-style="normal" fill="#000" text-anchor="start" letter-spacing="0.55" word-spacing="-1.5">0</text>
<text x="1843.6" y="1303.8" font-family="Liberation Sans" font-size="20" font-weight="normal" font-style="normal" fill="#000" text-anchor="start" letter-spacing="0.55" word-spacing="-1.5">NO</text>
<path d="M46 1312 L56 1312 L46 1322 Z" stroke="none" stroke-width="2" fill="#388a27" />
<text x="50.7" y="1333.8" font-family="Liberation Sans" font-size="20" font-weight="normal" font-style="normal" fill="#000" text-anchor="start" textLength="225.5" lengthAdjust="spacingAndGlyphs" >1729400639607114911</text>
<text x="653.6" y="1333.8" font-family="Liberation Sans" font-size="20" font-weight="normal" font-style="normal" fill="#000" text-anchor="start" letter-spacing="0.55" word-spacing="-1.5">£28.65</text>
<path d="M794 1312 L804 1312 L794 1322 Z" stroke="none" stroke-width="2" fill="#388a27" />
<text x="797.6" y="1333.8" font-family="Liberation Sans" font-size="20" font-weight="normal" font-style="normal" fill="#000" text-anchor="start" letter-spacing="0.55" word-spacing="-1.5">99999</text>
<text x="905.6" y="1333.8" font-family="Liberation Sans" font-size="20" font-weight="normal" font-style="normal" fill="#000" text-anchor="start" letter-spacing="0.55" word-spacing="-1.5">Unavailable</text>
<text x="1049.6" y="1333.8" font-family="Liberation Sans" font-size="20" font-weight="normal" font-style="normal" fill="#000" text-anchor="start" letter-spacing="0.55" word-spacing="-1.5">NO</text>
<text x="1463.6" y="1333.8" font-family="Liberation Sans" font-size="20" font-weight="normal" font-style="normal" fill="#000" text-anchor="start" letter-spacing="0.55" word-spacing="-1.5">NO</text>
<text x="1843.6" y="1333.8" font-family="Liberation Sans" font-size="20" font-weight="normal" font-style="normal" fill="#000" text-anchor="start" letter-spacing="0.55" word-spacing="-1.5">NO</text>
<path d="M46 1342 L56 1342 L46 1352 Z" stroke="none" stroke-width="2" fill="#388a27" />
<text x="50.7" y="1363.8" font-family="Liberation Sans" font-size="20" font-weight="normal" font-style="normal" fill="#000" text-anchor="start" textLength="225.5" lengthAdjust="spacingAndGlyphs" >1729400648740605087</text>
<text x="653.6" y="1363.8" font-family="Liberation Sans" font-size="20" font-weight="normal" font-style="normal" fill="#000" text-anchor="start" letter-spacing="0.55" word-spacing="-1.5">£28.65</text>
<path d="M794 1342 L804 1342 L794 1352 Z" stroke="none" stroke-width="2" fill="#388a27" />
<text x="797.6" y="1363.8" font-family="Liberation Sans" font-size="20" font-weight="normal" font-style="normal" fill="#000" text-anchor="start" letter-spacing="0.55" word-spacing="-1.5">199998</text>
<text x="905.6" y="1363.8" font-family="Liberation Sans" font-size="20" font-weight="normal" font-style="normal" fill="#000" text-anchor="start" letter-spacing="0.55" word-spacing="-1.5">Unavailable</text>
<text x="1049.6" y="1363.8" font-family="Liberation Sans" font-size="20" font-weight="normal" font-style="normal" fill="#000" text-anchor="start" letter-spacing="0.55" word-spacing="-1.5">NO</text>
<text x="1463.6" y="1363.8" font-family="Liberation Sans" font-size="20" font-weight="normal" font-style="normal" fill="#000" text-anchor="start" letter-spacing="0.55" word-spacing="-1.5">NO</text>
<text x="1843.6" y="1363.8" font-family="Liberation Sans" font-size="20" font-weight="normal" font-style="normal" fill="#000" text-anchor="start" letter-spacing="0.55" word-spacing="-1.5">NO</text>
<path d="M46 1372 L56 1372 L46 1382 Z" stroke="none" stroke-width="2" fill="#388a27" />
<text x="50.7" y="1393.8" font-family="Liberation Sans" font-size="20" font-weight="normal" font-style="normal" fill="#000" text-anchor="start" textLength="225.5" lengthAdjust="spacingAndGlyphs" >1729400726048967839</text>
<text x="653.6" y="1393.8" font-family="Liberation Sans" font-size="20" font-weight="normal" font-style="normal" fill="#000" text-anchor="start" letter-spacing="0.55" word-spacing="-1.5">£10.00</text>
<path d="M794 1372 L804 1372 L794 1382 Z" stroke="none" stroke-width="2" fill="#388a27" />
<text x="797.6" y="1393.8" font-family="Liberation Sans" font-size="20" font-weight="normal" font-style="normal" fill="#000" text-anchor="start" letter-spacing="0.55" word-spacing="-1.5">1233</text>
<text x="905.6" y="1393.8" font-family="Liberation Sans" font-size="20" font-weight="normal" font-style="normal" fill="#000" text-anchor="start" letter-spacing="0.55" word-spacing="-1.5">Unavailable</text>
<text x="1049.6" y="1393.8" font-family="Liberation Sans" font-size="20" font-weight="normal" font-style="normal" fill="#000" text-anchor="start" letter-spacing="0.55" word-spacing="-1.5">YES</text>
<path d="M1200 1372 L1210 1372 L1200 1382 Z" stroke="none" stroke-width="2" fill="#388a27" />
<text x="1203.6" y="1393.8" font-family="Liberation Sans" font-size="20" font-weight="normal" font-style="normal" fill="#000" text-anchor="start" letter-spacing="0.55" word-spacing="-1.5">2000</text>
<text x="1331.6" y="1393.8" font-family="Liberation Sans" font-size="20" font-weight="normal" font-style="normal" fill="#000" text-anchor="start" letter-spacing="0.55" word-spacing="-1.5">£2.00</text>
<text x="1463.6" y="1393.8" font-family="Liberation Sans" font-size="20" font-weight="normal" font-style="normal" fill="#000" text-anchor="start" letter-spacing="0.55" word-spacing="-1.5">NO</text>
<path d="M1596 1372 L1606 1372 L1596 1382 Z" stroke="none" stroke-width="2" fill="#388a27" />
<text x="1599.6" y="1393.8" font-family="Liberation Sans" font-size="20" font-weight="normal" font-style="normal" fill="#000" text-anchor="start" letter-spacing="0.55" word-spacing="-1.5">3</text>
<path d="M1724 1372 L1734 1372 L1724 1382 Z" stroke="none" stroke-width="2" fill="#388a27" />
<text x="1727.6" y="1393.8" font-family="Liberation Sans" font-size="20" font-weight="normal" font-style="normal" fill="#000" text-anchor="start" letter-spacing="0.55" word-spacing="-1.5">0</text>
<text x="1843.6" y="1393.8" font-family="Liberation Sans" font-size="20" font-weight="normal" font-style="normal" fill="#000" text-anchor="start" letter-spacing="0.55" word-spacing="-1.5">NO</text>
<path d="M46 1402 L56 1402 L46 1406 Z" fill="#388a27"/>
<path d="M794 1402 L804 1402 L794 1406 Z" fill="#388a27"/>
<path d="M1200 1402 L1210 1402 L1200 1406 Z" fill="#388a27"/>
<path d="M1596 1402 L1606 1402 L1596 1406 Z" fill="#388a27"/>
<path d="M1724 1402 L1734 1402 L1724 1406 Z" fill="#388a27"/>
<text x="49.7" y="433.7" font-family="Liberation Sans" font-size="20" font-weight="normal" font-style="normal" fill="#000" text-anchor="start" letter-spacing="0.55" word-spacing="-1.5">Product ID</text>
<text x="291.6" y="433.7" font-family="Liberation Sans" font-size="20" font-weight="normal" font-style="normal" fill="#000" text-anchor="start" letter-spacing="0.55" word-spacing="-1.5">Product name</text>
<text x="653.6" y="433.7" font-family="Liberation Sans" font-size="20" font-weight="normal" font-style="normal" fill="#000" text-anchor="start" letter-spacing="0.55" word-spacing="-1.5">Product price</text>
<text x="797.6" y="433.7" font-family="Liberation Sans" font-size="20" font-weight="normal" font-style="normal" fill="#000" text-anchor="start" letter-spacing="0.55" word-spacing="-1.5">Stock</text>
<text x="905.6" y="404" font-family="Liberation Sans" font-size="20" font-weight="normal" font-style="normal" fill="#000" text-anchor="start" letter-spacing="0.55" word-spacing="-1.5">Products</text>
<text x="905.6" y="433.7" font-family="Liberation Sans" font-size="20" font-weight="normal" font-style="normal" fill="#000" text-anchor="start" letter-spacing="0.55" word-spacing="-1.5">status</text>
<text x="1049.6" y="404" font-family="Liberation Sans" font-size="20" font-weight="normal" font-style="normal" fill="#000" text-anchor="start" letter-spacing="0.55" word-spacing="-1.5">Add to open</text>
<text x="1049.6" y="433.7" font-family="Liberation Sans" font-size="20" font-weight="normal" font-style="normal" fill="#000" text-anchor="start" letter-spacing="0.55" word-spacing="-1.5">collaboration?</text>
<text x="1203.6" y="404" font-family="Liberation Sans" font-size="20" font-weight="normal" font-style="normal" fill="#000" text-anchor="start" letter-spacing="0.55" word-spacing="-1.5">Commission</text>
<text x="1203.6" y="433.7" font-family="Liberation Sans" font-size="20" font-weight="normal" font-style="normal" fill="#000" text-anchor="start" letter-spacing="0.55" word-spacing="-1.5">rate</text>
<text x="1331.6" y="404" font-family="Liberation Sans" font-size="20" font-weight="normal" font-style="normal" fill="#000" text-anchor="start" letter-spacing="0.55" word-spacing="-1.5">Est.</text>
<text x="1331.6" y="433.7" font-family="Liberation Sans" font-size="20" font-weight="normal" font-style="normal" fill="#000" text-anchor="start" letter-spacing="0.55" word-spacing="-1.5">commission</text>
<text x="1463.6" y="404" font-family="Liberation Sans" font-size="20" font-weight="normal" font-style="normal" fill="#000" text-anchor="start" letter-spacing="0.55" word-spacing="-1.5">Approve</text>
<text x="1463.6" y="433.7" font-family="Liberation Sans" font-size="20" font-weight="normal" font-style="normal" fill="#000" text-anchor="start" letter-spacing="0.55" word-spacing="-1.5">creators</text>
<text x="1599.6" y="404" font-family="Liberation Sans" font-size="20" font-weight="normal" font-style="normal" fill="#000" text-anchor="start" letter-spacing="0.55" word-spacing="-1.5">Creator</text>
<text x="1599.6" y="433.7" font-family="Liberation Sans" font-size="20" font-weight="normal" font-style="normal" fill="#000" text-anchor="start" letter-spacing="0.55" word-spacing="-1.5">showcase</text>
<text x="1727.6" y="404" font-family="Liberation Sans" font-size="20" font-weight="normal" font-style="normal" fill="#000" text-anchor="start" letter-spacing="0.55" word-spacing="-1.5">Creator</text>
<text x="1727.6" y="433.7" font-family="Liberation Sans" font-size="20" font-weight="normal" font-style="normal" fill="#000" text-anchor="start" letter-spacing="0.55" word-spacing="-1.5">post</text>
<text x="1843.6" y="404" font-family="Liberation Sans" font-size="20" font-weight="normal" font-style="normal" fill="#000" text-anchor="start" letter-spacing="0.55" word-spacing="-1.5">Offer free</text>
<text x="1843.6" y="433.7" font-family="Liberation Sans" font-size="20" font-weight="normal" font-style="normal" fill="#000" text-anchor="start" letter-spacing="0.55" word-spacing="-1.5">samples</text>
<text x="1972.6" y="404" font-family="Liberation Sans" font-size="20" font-weight="normal" font-style="normal" fill="#000" text-anchor="start" letter-spacing="0.55" word-spacing="-1.5">Sample</text>
<text x="1972.6" y="433.7" font-family="Liberation Sans" font-size="20" font-weight="normal" font-style="normal" fill="#000" text-anchor="start" letter-spacing="0.55" word-spacing="-1.5">quantity</text>
<text x="2109.6" y="404" font-family="Liberation Sans" font-size="20" font-weight="normal" font-style="normal" fill="#000" text-anchor="start" letter-spacing="0.55" word-spacing="-1.5">Minimum</text>
<text x="2109.6" y="433.7" font-family="Liberation Sans" font-size="20" font-weight="normal" font-style="normal" fill="#000" text-anchor="start" letter-spacing="0.55" word-spacing="-1.5">follower count</text>
<text x="2275.6" y="404" font-family="Liberation Sans" font-size="20" font-weight="normal" font-style="normal" fill="#000" text-anchor="start" letter-spacing="0.55" word-spacing="-1.5">Minimum 30-day</text>
<text x="2275.6" y="433.7" font-family="Liberation Sans" font-size="20" font-weight="normal" font-style="normal" fill="#000" text-anchor="start" letter-spacing="0.55" word-spacing="-1.5">sales volume (£)</text>
<text x="2450.6" y="404" font-family="Liberation Sans" font-size="20" font-weight="normal" font-style="normal" fill="#000" text-anchor="start" textLength="174" lengthAdjust="spacingAndGlyphs" >average video views</text>
<text x="2449.6" y="433.7" font-family="Liberation Sans" font-size="20" font-weight="normal" font-style="normal" fill="#000" text-anchor="start" letter-spacing="0.55" word-spacing="-1.5">per video</text>
<text x="2634.6" y="404" font-family="Liberation Sans" font-size="20" font-weight="normal" font-style="normal" fill="#000" text-anchor="start" letter-spacing="0.55" word-spacing="-1.5">Creator</text>
<text x="2634.6" y="433.7" font-family="Liberation Sans" font-size="20" font-weight="normal" font-style="normal" fill="#000" text-anchor="start" letter-spacing="0.55" word-spacing="-1.5">fulfillment rate</text>
<g shape-rendering="crispEdges">
<rect x="281" y="442" width="28.2" height="21.2" fill="#d8d8d8" />
<rect x="308.6" y="442" width="39.2" height="21.2" fill="#d6d6d6" />
<rect x="347.2" y="442" width="39.2" height="21.2" fill="#d9d9d9" />
<rect x="385.8" y="442" width="39.2" height="21.2" fill="#d7d7d7" />
<rect x="424.4" y="442" width="39.2" height="21.2" fill="#ececec" />
<rect x="463.0" y="442" width="39.2" height="21.2" fill="#e9e9e9" />
<rect x="501.6" y="442" width="39.2" height="21.2" fill="#e9e9e9" />
<rect x="540.2" y="442" width="39.2" height="21.2" fill="#f6f6f6" />
<rect x="578.8" y="442" width="39.2" height="21.2" fill="#f9f9f9" />
<rect x="617.4" y="442" width="35.2" height="21.2" fill="#f5f5f5" />
<rect x="281" y="462.6" width="28.2" height="39.2" fill="#eaeaea" />
<rect x="308.6" y="462.6" width="39.2" height="39.2" fill="#e2e2e2" />
<rect x="347.2" y="462.6" width="39.2" height="39.2" fill="#e4e4e4" />
<rect x="385.8" y="462.6" width="39.2" height="39.2" fill="#e3e3e3" />
<rect x="424.4" y="462.6" width="39.2" height="39.2" fill="#e6e6e6" />
<rect x="463.0" y="462.6" width="39.2" height="39.2" fill="#dfdfdf" />
<rect x="501.6" y="462.6" width="39.2" height="39.2" fill="#e4e4e4" />
<rect x="540.2" y="462.6" width="39.2" height="39.2" fill="#f1f1f1" />
<rect x="578.8" y="462.6" width="39.2" height="39.2" fill="#fafafa" />
<rect x="617.4" y="462.6" width="35.2" height="39.2" fill="#f7f7f7" />
<rect x="281" y="501.2" width="28.2" height="39.2" fill="#ececec" />
<rect x="308.6" y="501.2" width="39.2" height="39.2" fill="#eaeaea" />
<rect x="347.2" y="501.2" width="39.2" height="39.2" fill="#eeeeee" />
<rect x="385.8" y="501.2" width="39.2" height="39.2" fill="#ececec" />
<rect x="424.4" y="501.2" width="39.2" height="39.2" fill="#f0f0f0" />
<rect x="463.0" y="501.2" width="39.2" height="39.2" fill="#f9f9f9" />
<rect x="501.6" y="501.2" width="39.2" height="39.2" fill="#f9f9f9" />
<rect x="540.2" y="501.2" width="39.2" height="39.2" fill="#f9f9f9" />
<rect x="578.8" y="501.2" width="39.2" height="39.2" fill="#f9f9f9" />
<rect x="617.4" y="501.2" width="35.2" height="39.2" fill="#f6f6f6" />
<rect x="281" y="539.8" width="28.2" height="39.2" fill="#e4e4e4" />
<rect x="308.6" y="539.8" width="39.2" height="39.2" fill="#e1e1e1" />
<rect x="347.2" y="539.8" width="39.2" height="39.2" fill="#dcdcdc" />
<rect x="385.8" y="539.8" width="39.2" height="39.2" fill="#dcdcdc" />
<rect x="424.4" y="539.8" width="39.2" height="39.2" fill="#dcdcdc" />
<rect x="463.0" y="539.8" width="39.2" height="39.2" fill="#dfdfdf" />
<rect x="501.6" y="539.8" width="39.2" height="39.2" fill="#d9d9d9" />
<rect x="540.2" y="539.8" width="39.2" height="39.2" fill="#efefef" />
<rect x="578.8" y="539.8" width="39.2" height="39.2" fill="#f0f0f0" />
<rect x="617.4" y="539.8" width="35.2" height="39.2" fill="#f6f6f6" />
<rect x="281" y="578.4" width="28.2" height="39.2" fill="#e6e6e6" />
<rect x="308.6" y="578.4" width="39.2" height="39.2" fill="#dcdcdc" />
<rect x="347.2" y="578.4" width="39.2" height="39.2" fill="#dcdcdc" />
<rect x="385.8" y="578.4" width="39.2" height="39.2" fill="#dfdfdf" />
<rect x="424.4" y="578.4" width="39.2" height="39.2" fill="#e1e1e1" />
<rect x="463.0" y="578.4" width="39.2" height="39.2" fill="#dfdfdf" />
<rect x="501.6" y="578.4" width="39.2" height="39.2" fill="#e0e0e0" />
<rect x="540.2" y="578.4" width="39.2" height="39.2" fill="#e0e0e0" />
<rect x="578.8" y="578.4" width="39.2" height="39.2" fill="#e0e0e0" />
<rect x="617.4" y="578.4" width="35.2" height="39.2" fill="#e6e6e6" />
<rect x="281" y="617.0" width="28.2" height="39.2" fill="#e9e9e9" />
<rect x="308.6" y="617.0" width="39.2" height="39.2" fill="#e4e4e4" />
<rect x="347.2" y="617.0" width="39.2" height="39.2" fill="#e4e4e4" />
<rect x="385.8" y="617.0" width="39.2" height="39.2" fill="#e4e4e4" />
<rect x="424.4" y="617.0" width="39.2" height="39.2" fill="#e9e9e9" />
<rect x="463.0" y="617.0" width="39.2" height="39.2" fill="#e9e9e9" />
<rect x="501.6" y="617.0" width="39.2" height="39.2" fill="#e4e4e4" />
<rect x="540.2" y="617.0" width="39.2" height="39.2" fill="#e2e2e2" />
<rect x="578.8" y="617.0" width="39.2" height="39.2" fill="#e2e2e2" />
<rect x="617.4" y="617.0" width="35.2" height="39.2" fill="#e6e6e6" />
<rect x="281" y="655.6" width="28.2" height="39.2" fill="#e7e7e7" />
<rect x="308.6" y="655.6" width="39.2" height="39.2" fill="#e1e1e1" />
<rect x="347.2" y="655.6" width="39.2" height="39.2" fill="#dedede" />
<rect x="385.8" y="655.6" width="39.2" height="39.2" fill="#e2e2e2" />
<rect x="424.4" y="655.6" width="39.2" height="39.2" fill="#e6e6e6" />
<rect x="463.0" y="655.6" width="39.2" height="39.2" fill="#e8e8e8" />
<rect x="501.6" y="655.6" width="39.2" height="39.2" fill="#e8e8e8" />
<rect x="540.2" y="655.6" width="39.2" height="39.2" fill="#e0e0e0" />
<rect x="578.8" y="655.6" width="39.2" height="39.2" fill="#e0e0e0" />
<rect x="617.4" y="655.6" width="35.2" height="39.2" fill="#e4e4e4" />
<rect x="281" y="694.2" width="28.2" height="39.2" fill="#dddddd" />
<rect x="308.6" y="694.2" width="39.2" height="39.2" fill="#dadada" />
<rect x="347.2" y="694.2" width="39.2" height="39.2" fill="#e6e6e6" />
<rect x="385.8" y="694.2" width="39.2" height="39.2" fill="#eeeeee" />
<rect x="424.4" y="694.2" width="39.2" height="39.2" fill="#eeeeee" />
<rect x="463.0" y="694.2" width="39.2" height="39.2" fill="#ededed" />
<rect x="501.6" y="694.2" width="39.2" height="39.2" fill="#ebebeb" />
<rect x="540.2" y="694.2" width="39.2" height="39.2" fill="#ebebeb" />
<rect x="578.8" y="694.2" width="39.2" height="39.2" fill="#ebebeb" />
<rect x="617.4" y="694.2" width="35.2" height="39.2" fill="#e9e9e9" />
<rect x="281" y="732.8" width="28.2" height="39.2" fill="#e9e9e9" />
<rect x="308.6" y="732.8" width="39.2" height="39.2" fill="#e9e9e9" />
<rect x="347.2" y="732.8" width="39.2" height="39.2" fill="#ebebeb" />
<rect x="385.8" y="732.8" width="39.2" height="39.2" fill="#e9e9e9" />
<rect x="424.4" y="732.8" width="39.2" height="39.2" fill="#e7e7e7" />
<rect x="463.0" y="732.8" width="39.2" height="39.2" fill="#e8e8e8" />
<rect x="501.6" y="732.8" width="39.2" height="39.2" fill="#e4e4e4" />
<rect x="540.2" y="732.8" width="39.2" height="39.2" fill="#e4e4e4" />
<rect x="578.8" y="732.8" width="39.2" height="39.2" fill="#e4e4e4" />
<rect x="617.4" y="732.8" width="35.2" height="39.2" fill="#e6e6e6" />
<rect x="281" y="771.4" width="28.2" height="39.2" fill="#e8e8e8" />
<rect x="308.6" y="771.4" width="39.2" height="39.2" fill="#e4e4e4" />
<rect x="347.2" y="771.4" width="39.2" height="39.2" fill="#e4e4e4" />
<rect x="385.8" y="771.4" width="39.2" height="39.2" fill="#e6e6e6" />
<rect x="424.4" y="771.4" width="39.2" height="39.2" fill="#ebebeb" />
<rect x="463.0" y="771.4" width="39.2" height="39.2" fill="#e4e4e4" />
<rect x="501.6" y="771.4" width="39.2" height="39.2" fill="#e6e6e6" />
<rect x="540.2" y="771.4" width="39.2" height="39.2" fill="#e8e8e8" />
<rect x="578.8" y="771.4" width="39.2" height="39.2" fill="#e6e6e6" />
<rect x="617.4" y="771.4" width="35.2" height="39.2" fill="#e8e8e8" />
<rect x="281" y="810.0" width="28.2" height="39.2" fill="#e4e4e4" />
<rect x="308.6" y="810.0" width="39.2" height="39.2" fill="#dcdcdc" />
<rect x="347.2" y="810.0" width="39.2" height="39.2" fill="#e1e1e1" />
<rect x="385.8" y="810.0" width="39.2" height="39.2" fill="#e1e1e1" />
<rect x="424.4" y="810.0" width="39.2" height="39.2" fill="#e1e1e1" />
<rect x="463.0" y="810.0" width="39.2" height="39.2" fill="#dedede" />
<rect x="501.6" y="810.0" width="39.2" height="39.2" fill="#dcdcdc" />
<rect x="540.2" y="810.0" width="39.2" height="39.2" fill="#e1e1e1" />
<rect x="578.8" y="810.0" width="39.2" height="39.2" fill="#f1f1f1" />
<rect x="617.4" y="810.0" width="35.2" height="39.2" fill="#f9f9f9" />
<rect x="281" y="848.6" width="28.2" height="39.2" fill="#e4e4e4" />
<rect x="308.6" y="848.6" width="39.2" height="39.2" fill="#dedede" />
<rect x="347.2" y="848.6" width="39.2" height="39.2" fill="#dadada" />
<rect x="385.8" y="848.6" width="39.2" height="39.2" fill="#e2e2e2" />
<rect x="424.4" y="848.6" width="39.2" height="39.2" fill="#dadada" />
<rect x="463.0" y="848.6" width="39.2" height="39.2" fill="#e4e4e4" />
<rect x="501.6" y="848.6" width="39.2" height="39.2" fill="#dedede" />
<rect x="540.2" y="848.6" width="39.2" height="39.2" fill="#e4e4e4" />
<rect x="578.8" y="848.6" width="39.2" height="39.2" fill="#e6e6e6" />
<rect x="617.4" y="848.6" width="35.2" height="39.2" fill="#e6e6e6" />
<rect x="281" y="887.2" width="28.2" height="39.2" fill="#eaeaea" />
<rect x="308.6" y="887.2" width="39.2" height="39.2" fill="#e8e8e8" />
<rect x="347.2" y="887.2" width="39.2" height="39.2" fill="#e5e5e5" />
<rect x="385.8" y="887.2" width="39.2" height="39.2" fill="#ebebeb" />
<rect x="424.4" y="887.2" width="39.2" height="39.2" fill="#ebebeb" />
<rect x="463.0" y="887.2" width="39.2" height="39.2" fill="#e6e6e6" />
<rect x="501.6" y="887.2" width="39.2" height="39.2" fill="#e6e6e6" />
<rect x="540.2" y="887.2" width="39.2" height="39.2" fill="#e8e8e8" />
<rect x="578.8" y="887.2" width="39.2" height="39.2" fill="#e6e6e6" />
<rect x="617.4" y="887.2" width="35.2" height="39.2" fill="#e6e6e6" />
<rect x="281" y="925.8" width="28.2" height="39.2" fill="#e9e9e9" />
<rect x="308.6" y="925.8" width="39.2" height="39.2" fill="#e9e9e9" />
<rect x="347.2" y="925.8" width="39.2" height="39.2" fill="#e9e9e9" />
<rect x="385.8" y="925.8" width="39.2" height="39.2" fill="#e8e8e8" />
<rect x="424.4" y="925.8" width="39.2" height="39.2" fill="#e8e8e8" />
<rect x="463.0" y="925.8" width="39.2" height="39.2" fill="#e6e6e6" />
<rect x="501.6" y="925.8" width="39.2" height="39.2" fill="#e8e8e8" />
<rect x="540.2" y="925.8" width="39.2" height="39.2" fill="#e1e1e1" />
<rect x="578.8" y="925.8" width="39.2" height="39.2" fill="#dedede" />
<rect x="617.4" y="925.8" width="35.2" height="39.2" fill="#ebebeb" />
<rect x="281" y="964.4" width="28.2" height="39.2" fill="#dfdfdf" />
<rect x="308.6" y="964.4" width="39.2" height="39.2" fill="#d7d7d7" />
<rect x="347.2" y="964.4" width="39.2" height="39.2" fill="#d7d7d7" />
<rect x="385.8" y="964.4" width="39.2" height="39.2" fill="#dcdcdc" />
<rect x="424.4" y="964.4" width="39.2" height="39.2" fill="#dcdcdc" />
<rect x="463.0" y="964.4" width="39.2" height="39.2" fill="#dcdcdc" />
<rect x="501.6" y="964.4" width="39.2" height="39.2" fill="#d8d8d8" />
<rect x="540.2" y="964.4" width="39.2" height="39.2" fill="#d8d8d8" />
<rect x="578.8" y="964.4" width="39.2" height="39.2" fill="#dedede" />
<rect x="617.4" y="964.4" width="35.2" height="39.2" fill="#f4f4f4" />
<rect x="281" y="1003.0" width="28.2" height="39.2" fill="#e8e8e8" />
<rect x="308.6" y="1003.0" width="39.2" height="39.2" fill="#e4e4e4" />
<rect x="347.2" y="1003.0" width="39.2" height="39.2" fill="#e4e4e4" />
<rect x="385.8" y="1003.0" width="39.2" height="39.2" fill="#ebebeb" />
<rect x="424.4" y="1003.0" width="39.2" height="39.2" fill="#e8e8e8" />
<rect x="463.0" y="1003.0" width="39.2" height="39.2" fill="#e6e6e6" />
<rect x="501.6" y="1003.0" width="39.2" height="39.2" fill="#e4e4e4" />
<rect x="540.2" y="1003.0" width="39.2" height="39.2" fill="#e4e4e4" />
<rect x="578.8" y="1003.0" width="39.2" height="39.2" fill="#e6e6e6" />
<rect x="617.4" y="1003.0" width="35.2" height="39.2" fill="#f8f8f8" />
<rect x="281" y="1041.6" width="28.2" height="39.2" fill="#e8e8e8" />
<rect x="308.6" y="1041.6" width="39.2" height="39.2" fill="#e4e4e4" />
<rect x="347.2" y="1041.6" width="39.2" height="39.2" fill="#e4e4e4" />
<rect x="385.8" y="1041.6" width="39.2" height="39.2" fill="#eeeeee" />
<rect x="424.4" y="1041.6" width="39.2" height="39.2" fill="#e8e8e8" />
<rect x="463.0" y="1041.6" width="39.2" height="39.2" fill="#e8e8e8" />
<rect x="501.6" y="1041.6" width="39.2" height="39.2" fill="#e4e4e4" />
<rect x="540.2" y="1041.6" width="39.2" height="39.2" fill="#e8e8e8" />
<rect x="578.8" y="1041.6" width="39.2" height="39.2" fill="#e8e8e8" />
<rect x="617.4" y="1041.6" width="35.2" height="39.2" fill="#f8f8f8" />
<rect x="281" y="1080.2" width="28.2" height="39.2" fill="#dedede" />
<rect x="308.6" y="1080.2" width="39.2" height="39.2" fill="#d9d9d9" />
<rect x="347.2" y="1080.2" width="39.2" height="39.2" fill="#d8d8d8" />
<rect x="385.8" y="1080.2" width="39.2" height="39.2" fill="#dadada" />
<rect x="424.4" y="1080.2" width="39.2" height="39.2" fill="#dcdcdc" />
<rect x="463.0" y="1080.2" width="39.2" height="39.2" fill="#dcdcdc" />
<rect x="501.6" y="1080.2" width="39.2" height="39.2" fill="#dcdcdc" />
<rect x="540.2" y="1080.2" width="39.2" height="39.2" fill="#dadada" />
<rect x="578.8" y="1080.2" width="39.2" height="39.2" fill="#dcdcdc" />
<rect x="617.4" y="1080.2" width="35.2" height="39.2" fill="#e4e4e4" />
<rect x="281" y="1118.8" width="28.2" height="39.2" fill="#e1e1e1" />
<rect x="308.6" y="1118.8" width="39.2" height="39.2" fill="#dedede" />
<rect x="347.2" y="1118.8" width="39.2" height="39.2" fill="#dadada" />
<rect x="385.8" y="1118.8" width="39.2" height="39.2" fill="#dcdcdc" />
<rect x="424.4" y="1118.8" width="39.2" height="39.2" fill="#dcdcdc" />
<rect x="463.0" y="1118.8" width="39.2" height="39.2" fill="#e4e4e4" />
<rect x="501.6" y="1118.8" width="39.2" height="39.2" fill="#e4e4e4" />
<rect x="540.2" y="1118.8" width="39.2" height="39.2" fill="#dedede" />
<rect x="578.8" y="1118.8" width="39.2" height="39.2" fill="#dedede" />
<rect x="617.4" y="1118.8" width="35.2" height="39.2" fill="#e0e0e0" />
<rect x="281" y="1157.4" width="28.2" height="39.2" fill="#ebebeb" />
<rect x="308.6" y="1157.4" width="39.2" height="39.2" fill="#e4e4e4" />
<rect x="347.2" y="1157.4" width="39.2" height="39.2" fill="#ececec" />
<rect x="385.8" y="1157.4" width="39.2" height="39.2" fill="#e6e6e6" />
<rect x="424.4" y="1157.4" width="39.2" height="39.2" fill="#eaeaea" />
<rect x="463.0" y="1157.4" width="39.2" height="39.2" fill="#eaeaea" />
<rect x="501.6" y="1157.4" width="39.2" height="39.2" fill="#e6e6e6" />
<rect x="540.2" y="1157.4" width="39.2" height="39.2" fill="#f9f9f9" />
<rect x="578.8" y="1157.4" width="39.2" height="39.2" fill="#f9f9f9" />
<rect x="617.4" y="1157.4" width="35.2" height="39.2" fill="#f4f4f4" />
<rect x="281" y="1196.0" width="28.2" height="39.2" fill="#e4e4e4" />
<rect x="308.6" y="1196.0" width="39.2" height="39.2" fill="#e2e2e2" />
<rect x="347.2" y="1196.0" width="39.2" height="39.2" fill="#e0e0e0" />
<rect x="385.8" y="1196.0" width="39.2" height="39.2" fill="#e6e6e6" />
<rect x="424.4" y="1196.0" width="39.2" height="39.2" fill="#e6e6e6" />
<rect x="463.0" y="1196.0" width="39.2" height="39.2" fill="#e6e6e6" />
<rect x="501.6" y="1196.0" width="39.2" height="39.2" fill="#e6e6e6" />
<rect x="540.2" y="1196.0" width="39.2" height="39.2" fill="#e4e4e4" />
<rect x="578.8" y="1196.0" width="39.2" height="39.2" fill="#e8e8e8" />
<rect x="617.4" y="1196.0" width="35.2" height="39.2" fill="#e8e8e8" />
<rect x="281" y="1234.6" width="28.2" height="39.2" fill="#e0e0e0" />
<rect x="308.6" y="1234.6" width="39.2" height="39.2" fill="#d6d6d6" />
<rect x="347.2" y="1234.6" width="39.2" height="39.2" fill="#dedede" />
<rect x="385.8" y="1234.6" width="39.2" height="39.2" fill="#d4d4d4" />
<rect x="424.4" y="1234.6" width="39.2" height="39.2" fill="#dadada" />
<rect x="463.0" y="1234.6" width="39.2" height="39.2" fill="#dcdcdc" />
<rect x="501.6" y="1234.6" width="39.2" height="39.2" fill="#dcdcdc" />
<rect x="540.2" y="1234.6" width="39.2" height="39.2" fill="#f4f4f4" />
<rect x="578.8" y="1234.6" width="39.2" height="39.2" fill="#fafafa" />
<rect x="617.4" y="1234.6" width="35.2" height="39.2" fill="#fafafa" />
<rect x="281" y="1273.2" width="28.2" height="39.2" fill="#e8e8e8" />
<rect x="308.6" y="1273.2" width="39.2" height="39.2" fill="#e4e4e4" />
<rect x="347.2" y="1273.2" width="39.2" height="39.2" fill="#e4e4e4" />
<rect x="385.8" y="1273.2" width="39.2" height="39.2" fill="#dadada" />
<rect x="424.4" y="1273.2" width="39.2" height="39.2" fill="#e4e4e4" />
<rect x="463.0" y="1273.2" width="39.2" height="39.2" fill="#e4e4e4" />
<rect x="501.6" y="1273.2" width="39.2" height="39.2" fill="#e4e4e4" />
<rect x="540.2" y="1273.2" width="39.2" height="39.2" fill="#f6f6f6" />
<rect x="578.8" y="1273.2" width="39.2" height="39.2" fill="#fafafa" />
<rect x="617.4" y="1273.2" width="35.2" height="39.2" fill="#f9f9f9" />
<rect x="281" y="1311.8" width="28.2" height="39.2" fill="#ebebeb" />
<rect x="308.6" y="1311.8" width="39.2" height="39.2" fill="#e8e8e8" />
<rect x="347.2" y="1311.8" width="39.2" height="39.2" fill="#ebebeb" />
<rect x="385.8" y="1311.8" width="39.2" height="39.2" fill="#e6e6e6" />
<rect x="424.4" y="1311.8" width="39.2" height="39.2" fill="#e8e8e8" />
<rect x="463.0" y="1311.8" width="39.2" height="39.2" fill="#e8e8e8" />
<rect x="501.6" y="1311.8" width="39.2" height="39.2" fill="#e8e8e8" />
<rect x="540.2" y="1311.8" width="39.2" height="39.2" fill="#f6f6f6" />
<rect x="578.8" y="1311.8" width="39.2" height="39.2" fill="#fafafa" />
<rect x="617.4" y="1311.8" width="35.2" height="39.2" fill="#f9f9f9" />
<rect x="281" y="1350.4" width="28.2" height="39.2" fill="#e2e2e2" />
<rect x="308.6" y="1350.4" width="39.2" height="39.2" fill="#dadada" />
<rect x="347.2" y="1350.4" width="39.2" height="39.2" fill="#e0e0e0" />
<rect x="385.8" y="1350.4" width="39.2" height="39.2" fill="#dedede" />
<rect x="424.4" y="1350.4" width="39.2" height="39.2" fill="#dedede" />
<rect x="463.0" y="1350.4" width="39.2" height="39.2" fill="#e0e0e0" />
<rect x="501.6" y="1350.4" width="39.2" height="39.2" fill="#e0e0e0" />
<rect x="540.2" y="1350.4" width="39.2" height="39.2" fill="#ececec" />
<rect x="578.8" y="1350.4" width="39.2" height="39.2" fill="#f4f4f4" />
<rect x="617.4" y="1350.4" width="35.2" height="39.2" fill="#f8f8f8" />
<rect x="281" y="1389.0" width="28.2" height="22.6" fill="#b4b4b4" />
<rect x="308.6" y="1389.0" width="39.2" height="22.6" fill="#a0a0a0" />
<rect x="347.2" y="1389.0" width="39.2" height="22.6" fill="#a4a4a4" />
<rect x="385.8" y="1389.0" width="39.2" height="22.6" fill="#a4a4a4" />
<rect x="424.4" y="1389.0" width="39.2" height="22.6" fill="#a0a0a0" />
<rect x="463.0" y="1389.0" width="39.2" height="22.6" fill="#a2a2a2" />
<rect x="501.6" y="1389.0" width="39.2" height="22.6" fill="#a0a0a0" />
<rect x="540.2" y="1389.0" width="39.2" height="22.6" fill="#9c9c9c" />
<rect x="578.8" y="1389.0" width="39.2" height="22.6" fill="#a8a8a8" />
<rect x="617.4" y="1389.0" width="35.2" height="22.6" fill="#b0b0b0" />
</g>
<rect x="2818" y="383" width="20" height="367" fill="#c9c9c9" rx="10" />
<rect x="2" y="1406" width="2840" height="1" fill="#585858" />
<rect x="2" y="1407" width="2840" height="1" fill="#636363" />
<rect x="2" y="1408" width="2840" height="50" fill="#333333" />
<rect x="2" y="1458" width="2840" height="1" fill="#121212" />
<path d="M2 1459 H2842 V1482 A20 20 0 0 1 2822 1502 H22 A20 20 0 0 1 2 1482 Z" fill="url(#sb)"/>
<path d="M44 1424 L30 1434 L44 1444 Z" stroke="none" stroke-width="2" fill="#6a6a6a" />
<path d="M76 1424 L90 1434 L76 1444 Z" stroke="none" stroke-width="2" fill="#6a6a6a" />
<path d="M121.5 1405 V1445 A5 5 0 0 0 126.5 1450 H273.5 A5 5 0 0 0 278.5 1445 V1405 Z" fill="#ffffff" stroke="none"/>
<path d="M121.5 1406 V1445 A5 5 0 0 0 126.5 1450 H273.5 A5 5 0 0 0 278.5 1445 V1406" fill="none" stroke="#5e5e5e" stroke-width="2"/>
<text x="160.5" y="1439.6" font-family="Liberation Sans" font-size="23" font-weight="bold" font-style="normal" fill="#3e7d52" text-anchor="start" textLength="76.5" lengthAdjust="spacingAndGlyphs" >Sheet1</text>
<rect x="308" y="1430.5" width="20" height="4" fill="#b8b8b8" />
<rect x="316" y="1422.5" width="4" height="20" fill="#b8b8b8" />
<rect x="354" y="1411" width="2" height="38" fill="#555" />
<text x="49.7" y="1490" font-family="Liberation Sans" font-size="22.5" font-weight="normal" font-style="normal" fill="#e8e8e8" text-anchor="start" textLength="67.5" lengthAdjust="spacingAndGlyphs"  stroke="#e8e8e8" stroke-width="0.45">Ready</text>
<text x="195" y="1490" font-family="Liberation Sans" font-size="22.5" font-weight="normal" font-style="normal" fill="#e8e8e8" text-anchor="start" textLength="280" lengthAdjust="spacingAndGlyphs"  stroke="#e8e8e8" stroke-width="0.45">Accessibility: Good to go</text>
<circle cx="38" cy="34" r="12.3" fill="#ed6a5e" stroke="#c8483d" stroke-width="1" />
<circle cx="38" cy="34" r="4.2" fill="#8d1b12" stroke="none" stroke-width="2" />
<circle cx="78" cy="34" r="12.3" fill="#f5bf4f" stroke="#d39b2c" stroke-width="1" />
<circle cx="118" cy="34" r="12.3" fill="#61c454" stroke="#3f9b33" stroke-width="1" />
<text x="184.5" y="42" font-family="Liberation Sans" font-size="23" font-weight="bold" font-style="normal" fill="#d6d6d6" text-anchor="start" textLength="99" lengthAdjust="spacingAndGlyphs" >AutoSave</text>
<rect x="296" y="20" width="79.5" height="28" fill="#1e1e1e" rx="14" />
<circle cx="310" cy="34" r="12.5" fill="#f2f2f2" stroke="none" stroke-width="2" />
<text x="329" y="38.4" font-family="Liberation Sans" font-size="15" font-weight="bold" font-style="normal" fill="#cbcbcb" text-anchor="start" textLength="30" lengthAdjust="spacingAndGlyphs" >OFF</text>
<path d="M403 47 V31.5 L416 19 L429 31.5 V47 H421 V37 H411 V47 Z" stroke="#f4f4f4" stroke-width="2.4" fill="none" stroke-linecap="round" stroke-linejoin="round"/>
<path d="M457.5 25 Q457.5 21.5 461 21.5 H478 L483 26.5 V44 Q483 47 480 47 H461 Q457.5 47 457.5 44 Z" stroke="#f4f4f4" stroke-width="2.4" fill="none" stroke-linecap="round" stroke-linejoin="round"/>
<path d="M463 21.5 V29 H477 V21.5" stroke="#f4f4f4" stroke-width="2.4" fill="none" stroke-linecap="round" stroke-linejoin="round"/>
<path d="M462 47 V37 H478 V47" stroke="#f4f4f4" stroke-width="2.4" fill="none" stroke-linecap="round" stroke-linejoin="round"/>
<path d="M521 47 H514.5 Q511 47 511 44 V25 Q511 21.5 514.5 21.5 H531 L536 26.5 V33" stroke="#f4f4f4" stroke-width="2.4" fill="none" stroke-linecap="round" stroke-linejoin="round"/>
<path d="M517 21.5 V29 H530 V21.5" stroke="#f4f4f4" stroke-width="2.4" fill="none" stroke-linecap="round" stroke-linejoin="round"/>
<path d="M516 47 V37 H524" stroke="#f4f4f4" stroke-width="2.4" fill="none" stroke-linecap="round" stroke-linejoin="round"/>
<path d="M524 48 L525 42 L536 31 Q539 30 540 33 L529 44 Z" stroke="none" stroke-width="2" fill="#f4f4f4" />
<path d="M567 19 V30 H578" stroke="#f4f4f4" stroke-width="2.4" fill="none" stroke-linecap="round" stroke-linejoin="round"/>
<path d="M568 29 C574 20 590 19 592 31 C593 38 586 43 573 50" stroke="#f4f4f4" stroke-width="2.4" fill="none" stroke-linecap="round" stroke-linejoin="round"/>
<path d="M610 31 L616.0 38 L622 31" stroke="#f0f0f0" stroke-width="2.4" fill="none" stroke-linecap="round" stroke-linejoin="round"/>
<path d="M670 25 A15 15 0 1 0 672 37" stroke="#f4f4f4" stroke-width="2.4" fill="none" stroke-linecap="round" stroke-linejoin="round"/>
<path d="M661 25.5 H671 V18" stroke="#f4f4f4" stroke-width="2.4" fill="none" stroke-linecap="round" stroke-linejoin="round"/>
<circle cx="702.5" cy="34.5" r="2.9" fill="#f0f0f0" stroke="none" stroke-width="2" />
<circle cx="712" cy="34.5" r="2.9" fill="#f0f0f0" stroke="none" stroke-width="2" />
<circle cx="721.5" cy="34.5" r="2.9" fill="#f0f0f0" stroke="none" stroke-width="2" />
<path d="M921 18.5 H936 L943 25.5 V48 H921 Z" stroke="none" stroke-width="2" fill="#f4f4f4" />
<path d="M936 18.5 V25.5 H943" stroke="none" stroke-width="2" fill="#cfcfcf" />
<rect x="916" y="24.5" width="14" height="15" fill="#6a9c78" rx="1.5" />
<text x="918.5" y="36.5" font-family="Liberation Sans" font-size="11" font-weight="bold" font-style="normal" fill="#ffffff" text-anchor="start" >X</text>
<rect x="932" y="28" width="3.5" height="3" fill="#7fae8e" />
<rect x="936.5" y="28" width="3.5" height="3" fill="#7fae8e" />
<rect x="932" y="32.5" width="3.5" height="3" fill="#7fae8e" />
<rect x="936.5" y="32.5" width="3.5" height="3" fill="#7fae8e" />
<rect x="932" y="37" width="3.5" height="3" fill="#7fae8e" />
<rect x="936.5" y="37" width="3.5" height="3" fill="#7fae8e" />
<text x="955" y="44" font-family="Liberation Sans" font-size="27" font-weight="bold" font-style="normal" fill="#ffffff" text-anchor="start" textLength="950" lengthAdjust="spacingAndGlyphs" >bulkedit_7494177680701622431_2024-05-22T12-54-50-CCw45N7Yt4J</text>
<path d="M1914 32 L1924.0 40 L1934 32" stroke="#767676" stroke-width="2.2" fill="none" stroke-linecap="round" stroke-linejoin="round"/>
<circle cx="2734.5" cy="32.5" r="10.5" fill="none" stroke="#f0f0f0" stroke-width="2.4" />
<path d="M2742 40.5 L2750 48" stroke="#f0f0f0" stroke-width="2.6" fill="none" stroke-linecap="round" stroke-linejoin="round"/>
<circle cx="2798" cy="30.3" r="5" fill="none" stroke="#f4f4f4" stroke-width="2.2" />
<path d="M2789.2 40 H2807 A8.9 8.9 0 0 1 2789.2 40 Z" stroke="#f4f4f4" stroke-width="2.2" fill="none" stroke-linecap="round" stroke-linejoin="round"/>
<path d="M2806 22 Q2806 19 2809 19 H2816 Q2819 19 2819 22 V27.5 Q2819 30 2816 30 H2812 L2809 33.5 V30 Q2806 30 2806 27 Z" stroke="#f4f4f4" stroke-width="2" fill="none" stroke-linecap="round" stroke-linejoin="round"/>
<text x="22.4" y="103.8" font-family="Liberation Sans" font-size="28" font-weight="bold" font-style="normal" fill="#e4e4e4" text-anchor="start" textLength="74.6" lengthAdjust="spacingAndGlyphs" >Home</text>
<text x="144.4" y="103.8" font-family="Liberation Sans" font-size="28" font-weight="bold" font-style="normal" fill="#e4e4e4" text-anchor="start" textLength="70.6" lengthAdjust="spacingAndGlyphs" >Insert</text>
<text x="266.4" y="103.8" font-family="Liberation Sans" font-size="28" font-weight="bold" font-style="normal" fill="#e4e4e4" text-anchor="start" textLength="63" lengthAdjust="spacingAndGlyphs" >Draw</text>
<text x="378.7" y="103.8" font-family="Liberation Sans" font-size="28" font-weight="bold" font-style="normal" fill="#e4e4e4" text-anchor="start" textLength="151.3" lengthAdjust="spacingAndGlyphs" >Page Layout</text>
<text x="583" y="103.8" font-family="Liberation Sans" font-size="28" font-weight="bold" font-style="normal" fill="#e4e4e4" text-anchor="start" textLength="113.4" lengthAdjust="spacingAndGlyphs" >Formulas</text>
<text x="748.6" y="103.8" font-family="Liberation Sans" font-size="28" font-weight="bold" font-style="normal" fill="#e4e4e4" text-anchor="start" textLength="56.4" lengthAdjust="spacingAndGlyphs" >Data</text>
<text x="852.4" y="103.8" font-family="Liberation Sans" font-size="28" font-weight="bold" font-style="normal" fill="#e4e4e4" text-anchor="start" textLength="87.6" lengthAdjust="spacingAndGlyphs" >Review</text>
<text x="989" y="103.8" font-family="Liberation Sans" font-size="28" font-weight="bold" font-style="normal" fill="#e4e4e4" text-anchor="start" textLength="59" lengthAdjust="spacingAndGlyphs" >View</text>
<text x="1127" y="103.8" font-family="Liberation Sans" font-size="28" font-weight="bold" font-style="normal" fill="#e4e4e4" text-anchor="start" textLength="85.5" lengthAdjust="spacingAndGlyphs" >Tell me</text>
<rect x="22" y="116" width="76" height="6" fill="#e2e2e2" rx="3" />
<path d="M1090.5 99 C1084 93 1085 84 1096.5 83.5 C1108 84 1109 93 1102.5 99 V103 H1090.5 Z" stroke="#dcdcdc" stroke-width="2.2" fill="none" stroke-linecap="round" stroke-linejoin="round"/>
<path d="M1092 106.5 H1101" stroke="#dcdcdc" stroke-width="2.2" fill="none" stroke-linecap="round" stroke-linejoin="round"/>
<rect x="2479" y="74" width="191.6" height="47.7" fill="#5c5c5c" rx="8" />
<path d="M2498 87 H2520 V104 H2505 L2499 110 V104 H2498 Z" stroke="#e4e4e4" stroke-width="2" fill="none" stroke-linecap="round" stroke-linejoin="round"/>
<text x="2532" y="107.4" font-family="Liberation Sans" font-size="23.5" font-weight="bold" font-style="normal" fill="#ebebeb" text-anchor="start" textLength="125" lengthAdjust="spacingAndGlyphs" >Comments</text>
<rect x="2691" y="74" width="132.7" height="47.7" fill="#5c5c5c" rx="8" />
<path d="M2710 95 V109.5 H2731 V104" stroke="#e4e4e4" stroke-width="2" fill="none" stroke-linecap="round" stroke-linejoin="round"/>
<path d="M2715 104 C2716 94 2721 91 2727 91 V86.5 L2733 94 L2727 101 V96.5 C2722 96.5 2718 99 2715 104 Z" stroke="#e4e4e4" stroke-width="2" fill="none" stroke-linecap="round" stroke-linejoin="round"/>
<text x="2744" y="107.4" font-family="Liberation Sans" font-size="23.5" font-weight="bold" font-style="normal" fill="#ebebeb" text-anchor="start" textLength="66" lengthAdjust="spacingAndGlyphs" >Share</text>
<rect x="208" y="134" width="2" height="124" fill="#4e4e4e" />
<rect x="748" y="134" width="2" height="124" fill="#4e4e4e" />
<rect x="1072" y="134" width="2" height="124" fill="#4e4e4e" />
<rect x="1350" y="134" width="2" height="124" fill="#4e4e4e" />
<rect x="1702" y="134" width="2" height="124" fill="#4e4e4e" />
<rect x="2066" y="134" width="2" height="124" fill="#4e4e4e" />
<rect x="2404" y="134" width="2" height="124" fill="#4e4e4e" />
<rect x="2714" y="134" width="2" height="124" fill="#4e4e4e" />
<rect x="36.5" y="152.5" width="37" height="44.5" fill="none" stroke="#e5a13b" stroke-width="5"/>
<rect x="61" y="169" width="26" height="34" fill="#2b2b2b" stroke="#dcdcdc" stroke-width="2.4"/>
<path d="M42.5 160.5 V152.5 H50 A5 5 0 0 1 60 152.5 H67.5 V160.5 Z" stroke="#a8a8a8" stroke-width="2.2" fill="#2b2b2b" />
<text x="40.7" y="231.7" font-family="Liberation Sans" font-size="21" font-weight="normal" font-style="normal" fill="#ececec" text-anchor="start" textLength="54.3" lengthAdjust="spacingAndGlyphs"  stroke="#ececec" stroke-width="0.55">Paste</text>
<path d="M98 166 L104.0 173 L110 166" stroke="#ffffff" stroke-width="3" fill="none" stroke-linecap="round" stroke-linejoin="round"/>
<path d="M137 141 L148.5 164.5 M148 141 L136.5 164.5" stroke="#d0d0d0" stroke-width="1.8" fill="none" />
<circle cx="136" cy="167.5" r="3.6" fill="none" stroke="#4a8fd6" stroke-width="2" />
<circle cx="148.5" cy="167.5" r="3.6" fill="none" stroke="#4a8fd6" stroke-width="2" />
<path d="M139 213 H126.5 V184.5 H139 L142 187.5" stroke="#d8d8d8" stroke-width="2" fill="none" stroke-linecap="round" stroke-linejoin="round"/>
<path d="M138.5 190 H148 L157.5 199.5 V216 H138.5 Z" stroke="#d8d8d8" stroke-width="2" fill="#2b2b2b" stroke-linecap="round" stroke-linejoin="round"/>
<path d="M148 190 V199.5 H157.5" stroke="#d8d8d8" stroke-width="1.8" fill="none" />
<rect x="143.5" y="204" width="9" height="2" fill="#a0a0a0" />
<rect x="143.5" y="208.5" width="9" height="2" fill="#a0a0a0" />
<path d="M171 197 L176.5 204.5 L182 197" stroke="#ffffff" stroke-width="3" fill="none" stroke-linecap="round" stroke-linejoin="round"/>
<path d="M147.5 236.5 L154.5 229.8 A2.6 2.6 0 0 1 158.2 233.5 L151.5 240.5" stroke="#dcdcdc" stroke-width="2" fill="none" stroke-linecap="round" stroke-linejoin="round"/>
<path d="M139.6 236 L143 232.9 L154.2 243.5 L150.7 247.9 Z" stroke="#dcdcdc" stroke-width="2" fill="none" stroke-linecap="round" stroke-linejoin="round"/>
<path d="M139.6 236 Q133 240.5 126.4 242.2 L139.9 257.6 L150.7 247.9" stroke="#f3d99a" stroke-width="2" fill="none" stroke-linecap="round" stroke-linejoin="round"/>
<path d="M131 245 L146 250.5 L140 256 Z" stroke="none" stroke-width="2" fill="#dfa042" />
<rect x="230.6" y="144" width="281.2" height="47.3" fill="#343434" rx="6" stroke="#464646" stroke-width="1.5"/>
<text x="243" y="175.8" font-family="Liberation Sans" font-size="24.5" font-weight="normal" font-style="normal" fill="#f4f4f4" text-anchor="start" textLength="70" lengthAdjust="spacingAndGlyphs"  stroke="#f4f4f4" stroke-width="0.6">Calibri</text>
<path d="M491 166 L497.0 173 L503 166" stroke="#ffffff" stroke-width="3" fill="none" stroke-linecap="round" stroke-linejoin="round"/>
<rect x="516" y="144" width="107.6" height="47.3" fill="#343434" rx="6" stroke="#464646" stroke-width="1.5"/>
<text x="528.6" y="175.8" font-family="Liberation Sans" font-size="24.5" font-weight="normal" font-style="normal" fill="#f4f4f4" text-anchor="start" textLength="20" lengthAdjust="spacingAndGlyphs"  stroke="#f4f4f4" stroke-width="0.6">11</text>
<path d="M603 166 L609.0 173 L615 166" stroke="#ffffff" stroke-width="3" fill="none" stroke-linecap="round" stroke-linejoin="round"/>
<path d="M638 178 L649 152.5 L660 178 M642 170 H656" stroke="#d8d8d8" stroke-width="2.2" fill="none" />
<path d="M658 159.5 L663 153.5 L668 159.5" stroke="#4a8fd6" stroke-width="2" fill="none" />
<path d="M693 178 L702 158 L711 178 M696.2 171 H707.8" stroke="#d8d8d8" stroke-width="2.2" fill="none" />
<path d="M710 154.5 L715 159.5 L720 154.5" stroke="#4a8fd6" stroke-width="2" fill="none" />
<text x="247" y="239.5" font-family="Liberation Sans" font-size="26" font-weight="bold" font-style="normal" fill="#e0e0e0" text-anchor="start" textLength="15.5" lengthAdjust="spacingAndGlyphs" >B</text>
<text x="299" y="240" font-family="Liberation Serif" font-size="27" font-weight="normal" font-style="italic" fill="#d8d8d8" text-anchor="start" textLength="14" lengthAdjust="spacingAndGlyphs" >I</text>
<text x="348" y="238" font-family="Liberation Sans" font-size="25" font-weight="normal" font-style="normal" fill="#d8d8d8" text-anchor="start" textLength="17.7" lengthAdjust="spacingAndGlyphs" >U</text>
<rect x="348" y="242" width="18" height="2.2" fill="#d8d8d8" />
<path d="M388 229 L394.0 236 L400 229" stroke="#ffffff" stroke-width="3" fill="none" stroke-linecap="round" stroke-linejoin="round"/>
<rect x="422" y="214.5" width="2" height="35.099999999999994" fill="#4e4e4e" />
<g stroke="#e0e0e0" stroke-width="2" stroke-dasharray="2.2 2.2" fill="none"><rect x="448.5" y="217" width="29" height="27"/><line x1="463" y1="217" x2="463" y2="244"/><line x1="448.5" y1="230.5" x2="477.5" y2="230.5"/></g>
<rect x="447.8" y="243.5" width="30.2" height="2.4" fill="#f0f0f0" />
<path d="M494 229 L500.0 236 L506 229" stroke="#ffffff" stroke-width="3" fill="none" stroke-linecap="round" stroke-linejoin="round"/>
<rect x="528" y="214.5" width="2" height="35.099999999999994" fill="#4e4e4e" />
<path d="M559 229 L571 217 L583 229 L571 238 Z" stroke="#d0d0d0" stroke-width="2" fill="none" stroke-linecap="round" stroke-linejoin="round"/>
<path d="M568 220 V215 A2.5 2.5 0 0 1 573 215 V226" stroke="#d0d0d0" stroke-width="1.8" fill="none" />
<path d="M580 221 Q586 226 583 235 Q580 229 579 225 Z" stroke="none" stroke-width="2" fill="#8fbde8" />
<rect x="553.7" y="240" width="32.6" height="8" fill="#f7f34e" />
<path d="M600 229 L606.0 236 L612 229" stroke="#ffffff" stroke-width="3" fill="none" stroke-linecap="round" stroke-linejoin="round"/>
<path d="M637 238 L646 216 L655.4 238 M640.5 230 H652" stroke="#d8d8d8" stroke-width="2.2" fill="none" />
<rect x="629.8" y="240" width="32.2" height="8" fill="#e5362b" />
<path d="M676 229 L682.0 236 L688 229" stroke="#ffffff" stroke-width="3" fill="none" stroke-linecap="round" stroke-linejoin="round"/>
<rect x="780" y="152" width="28" height="2" fill="#e6e6e6" />
<rect x="786" y="159.7" width="17" height="2" fill="#e6e6e6" />
<rect x="780" y="168" width="28" height="2" fill="#e6e6e6" />
<rect x="832" y="158" width="28" height="2" fill="#e6e6e6" />
<rect x="838" y="165.8" width="16" height="2" fill="#e6e6e6" />
<rect x="832" y="174" width="28" height="2" fill="#e6e6e6" />
<rect x="874" y="144" width="48" height="47.7" fill="#4a4a4a" rx="6" />
<rect x="884" y="165.6" width="28" height="2" fill="#e6e6e6" />
<rect x="890" y="173.7" width="16" height="2" fill="#e6e6e6" />
<rect x="884" y="182" width="28" height="2" fill="#e6e6e6" />
<rect x="938" y="150.5" width="2" height="34.900000000000006" fill="#4e4e4e" />
<text x="0" y="0" font-family="Liberation Sans" font-size="20" fill="#d4d4d4" transform="translate(968.5 175) rotate(-45)">ab</text>
<path d="M974.5 181.5 L996 160" stroke="#4a8fd6" stroke-width="2.2" fill="none" />
<path d="M987 160 H996 V169" stroke="#4a8fd6" stroke-width="2.2" fill="none" />
<path d="M1010 166 L1016.0 173 L1022 166" stroke="#ffffff" stroke-width="3" fill="none" stroke-linecap="round" stroke-linejoin="round"/>
<rect x="780" y="217.5" width="28" height="2" fill="#e6e6e6" />
<rect x="780" y="225.7" width="20" height="2" fill="#e6e6e6" />
<rect x="780" y="233.8" width="28" height="2" fill="#e6e6e6" />
<rect x="780" y="242" width="20" height="2" fill="#e6e6e6" />
<rect x="832" y="217.5" width="28" height="2" fill="#e6e6e6" />
<rect x="838" y="225.7" width="16" height="2" fill="#e6e6e6" />
<rect x="832" y="233.8" width="28" height="2" fill="#e6e6e6" />
<rect x="838" y="242" width="16" height="2" fill="#e6e6e6" />
<rect x="884" y="217.5" width="28" height="2" fill="#e6e6e6" />
<rect x="892" y="225.7" width="20" height="2" fill="#e6e6e6" />
<rect x="884" y="233.8" width="28" height="2" fill="#e6e6e6" />
<rect x="892" y="242" width="20" height="2" fill="#e6e6e6" />
<rect x="938" y="215" width="2" height="35" fill="#4e4e4e" />
<rect x="966" y="217.5" width="28" height="2" fill="#e6e6e6" />
<rect x="982" y="225.7" width="12" height="2" fill="#e6e6e6" />
<rect x="982" y="233.8" width="12" height="2" fill="#e6e6e6" />
<rect x="966" y="242" width="28" height="2" fill="#e6e6e6" />
<path d="M978 230.8 H968 M972.5 226 L968 230.8 L972.5 235.5" stroke="#4a8fd6" stroke-width="2" fill="none" />
<rect x="1018" y="217.5" width="28" height="2" fill="#e6e6e6" />
<rect x="1034" y="225.7" width="12" height="2" fill="#e6e6e6" />
<rect x="1034" y="233.8" width="12" height="2" fill="#e6e6e6" />
<rect x="1018" y="242" width="28" height="2" fill="#e6e6e6" />
<path d="M1018 230.8 H1029 M1024.5 226 L1029 230.8 L1024.5 235.5" stroke="#4a8fd6" stroke-width="2" fill="none" />
<rect x="1090" y="144" width="181" height="47.7" fill="#333333" rx="6" />
<path d="M1096 144 H1248 V191.7 H1096 A6 6 0 0 1 1090 185.7 V150 A6 6 0 0 1 1096 144 Z" fill="#4a4a4a"/>
<text x="1101" y="168" font-family="Liberation Sans" font-size="17.5" font-weight="normal" font-style="normal" fill="#c8c8c8" text-anchor="start" textLength="27" lengthAdjust="spacingAndGlyphs" >ab</text>
<text x="1101" y="183.5" font-family="Liberation Sans" font-size="17.5" font-weight="normal" font-style="normal" fill="#c8c8c8" text-anchor="start" textLength="10" lengthAdjust="spacingAndGlyphs" >c</text>
<path d="M1125 170.5 Q1131 172 1129 178 Q1127 182 1117 181.5 M1121 177.5 L1116.5 181.5 L1121 185.5" stroke="#4a8fd6" stroke-width="2" fill="none" stroke-linecap="round" stroke-linejoin="round"/>
<text x="1142.7" y="175.9" font-family="Liberation Sans" font-size="21" font-weight="normal" font-style="normal" fill="#ffffff" text-anchor="start" textLength="99" lengthAdjust="spacingAndGlyphs"  stroke="#ffffff" stroke-width="0.55">Wrap Text</text>
<path d="M1254 166 L1259.75 173 L1265.5 166" stroke="#ffffff" stroke-width="3" fill="none" stroke-linecap="round" stroke-linejoin="round"/>
<rect x="1098.8" y="217" width="28.2" height="28" fill="none" stroke="#d0d0d0" stroke-width="2"/>
<rect x="1113" y="217" width="2" height="28" fill="#d0d0d0" />
<rect x="1098.8" y="223" width="28.2" height="16" fill="#2b2b2b" stroke="#4a8fd6" stroke-width="2"/>
<path d="M1103 231 H1123 M1107 227 L1103 231 L1107 235 M1119 227 L1123 231 L1119 235" stroke="#4a8fd6" stroke-width="2" fill="none" stroke-linecap="round" stroke-linejoin="round"/>
<text x="1142.7" y="239.5" font-family="Liberation Sans" font-size="21" font-weight="normal" font-style="normal" fill="#ffffff" text-anchor="start" textLength="157.3" lengthAdjust="spacingAndGlyphs"  stroke="#ffffff" stroke-width="0.55">Merge &amp; Center</text>
<path d="M1311 229.5 L1317.0 237 L1323 229.5" stroke="#ffffff" stroke-width="3" fill="none" stroke-linecap="round" stroke-linejoin="round"/>
<rect x="1371.4" y="144" width="309.2" height="47.7" fill="#343434" rx="6" stroke="#464646" stroke-width="1.5"/>
<text x="1383.8" y="175.9" font-family="Liberation Sans" font-size="24.5" font-weight="normal" font-style="normal" fill="#f4f4f4" text-anchor="start" textLength="85.2" lengthAdjust="spacingAndGlyphs"  stroke="#f4f4f4" stroke-width="0.6">General</text>
<path d="M1660 166 L1666.0 173 L1672 166" stroke="#ffffff" stroke-width="3" fill="none" stroke-linecap="round" stroke-linejoin="round"/>
<rect x="1380" y="223" width="30" height="21" fill="none" stroke="#d8d8d8" stroke-width="2"/>
<text x="1383" y="240" font-family="Liberation Sans" font-size="14" font-weight="normal" font-style="normal" fill="#d8d8d8" text-anchor="start" >C</text>
<g stroke="#e8c26a" stroke-width="2" fill="#2b2b2b"><ellipse cx="1402" cy="233" rx="8" ry="3.5"/><path d="M1394 233 V245 A8 3.5 0 0 0 1410 245 V233"/><path d="M1394 239 A8 3.5 0 0 0 1410 239" fill="none"/></g>
<path d="M1425 230 L1430.85 237 L1436.7 230" stroke="#ffffff" stroke-width="3" fill="none" stroke-linecap="round" stroke-linejoin="round"/>
<text x="1456.5" y="245.8" font-family="Liberation Sans" font-size="36" font-weight="normal" font-style="normal" fill="#d8d8d8" text-anchor="start" textLength="29.1" lengthAdjust="spacingAndGlyphs" >%</text>
<path d="M1524 222 C1532 222 1534 230 1531 236 C1529 240 1524 243 1519 244 C1522 241 1524 238 1524 235 C1519 234 1517 230 1518 227 C1519 224 1521 222 1524 222 Z" stroke="none" stroke-width="2" fill="#d8d8d8" />
<rect x="1562.6" y="215" width="2" height="35" fill="#4e4e4e" />
<path d="M1603 223 H1590 M1595 218.5 L1590 223 L1595 227.5" stroke="#4a8fd6" stroke-width="2" fill="none" stroke-linecap="round" stroke-linejoin="round"/>
<text x="1604" y="230" font-family="Liberation Sans" font-size="17" font-weight="normal" font-style="normal" fill="#d8d8d8" text-anchor="start" textLength="15" lengthAdjust="spacingAndGlyphs" >.0</text>
<text x="1592" y="246" font-family="Liberation Sans" font-size="17" font-weight="normal" font-style="normal" fill="#d8d8d8" text-anchor="start" textLength="27" lengthAdjust="spacingAndGlyphs" >.00</text>
<text x="1644" y="229" font-family="Liberation Sans" font-size="17" font-weight="normal" font-style="normal" fill="#d8d8d8" text-anchor="start" textLength="27" lengthAdjust="spacingAndGlyphs" >.00</text>
<path d="M1642 239 H1656 M1651 234.5 L1656 239 L1651 243.5" stroke="#4a8fd6" stroke-width="2" fill="none" stroke-linecap="round" stroke-linejoin="round"/>
<text x="1655" y="246" font-family="Liberation Sans" font-size="17" font-weight="normal" font-style="normal" fill="#d8d8d8" text-anchor="start" textLength="15" lengthAdjust="spacingAndGlyphs" >.0</text>
<path d="M1744 165 H1798 M1744 179.2 H1798 M1788 151 V193" stroke="#a2a2a2" stroke-width="2" fill="none" />
<rect x="1744" y="151" width="54" height="42" fill="none" stroke="#e8e8e8" stroke-width="2.2"/>
<rect x="1754" y="151" width="25" height="14" fill="#9e3434" stroke="#df6d6d" stroke-width="1.6"/>
<rect x="1754" y="165.5" width="17" height="13.5" fill="#2d6aa8" stroke="#7ab6e8" stroke-width="1.6"/>
<rect x="1754" y="179.5" width="28.5" height="13.5" fill="#9e3434" stroke="#df6d6d" stroke-width="1.6"/>
<path d="M1813 169 L1818.75 176.6 L1824.5 169" stroke="#ffffff" stroke-width="3" fill="none" stroke-linecap="round" stroke-linejoin="round"/>
<text x="1727.8" y="232" font-family="Liberation Sans" font-size="21" font-weight="normal" font-style="normal" fill="#ececec" text-anchor="start" textLength="111.8" lengthAdjust="spacingAndGlyphs"  stroke="#ececec" stroke-width="0.55">Conditional</text>
<text x="1729.5" y="256" font-family="Liberation Sans" font-size="21" font-weight="normal" font-style="normal" fill="#ececec" text-anchor="start" textLength="107.8" lengthAdjust="spacingAndGlyphs"  stroke="#ececec" stroke-width="0.55">Formatting</text>
<path d="M1859 165 H1914 M1859 179 H1914 M1877 151 V193 M1895 151 V193" stroke="#a2a2a2" stroke-width="2" fill="none" />
<rect x="1859" y="151" width="55" height="42" fill="none" stroke="#e8e8e8" stroke-width="2.2"/>
<rect x="1877" y="165" width="36" height="28" fill="#2a63ae" stroke="#86bdf0" stroke-width="1.8"/>
<path d="M1877 179 H1913 M1895 165 V193" stroke="#86bdf0" stroke-width="1.8" fill="none" />
<path d="M1888 187 L1912 161 Q1918 155 1917 163 L1896 194 Z" stroke="#2b2b2b" stroke-width="5" fill="#2b2b2b" />
<path d="M1888 187 L1912 161 Q1918 155 1917 163 L1896 194 Z" stroke="#dcdcdc" stroke-width="2" fill="#2b2b2b" stroke-linecap="round" stroke-linejoin="round"/>
<path d="M1872 200 Q1876 191 1884 187.5 Q1893 186 1894 193 Q1891 202 1872 200 Z" stroke="#86bdf0" stroke-width="1.6" fill="#2a63ae" />
<path d="M1928 169 L1934.0 176.6 L1940 169" stroke="#ffffff" stroke-width="3" fill="none" stroke-linecap="round" stroke-linejoin="round"/>
<text x="1861.5" y="232" font-family="Liberation Sans" font-size="21" font-weight="normal" font-style="normal" fill="#ececec" text-anchor="start" textLength="71" lengthAdjust="spacingAndGlyphs"  stroke="#ececec" stroke-width="0.55">Format</text>
<text x="1855.6" y="256" font-family="Liberation Sans" font-size="21" font-weight="normal" font-style="normal" fill="#ececec" text-anchor="start" textLength="82.7" lengthAdjust="spacingAndGlyphs"  stroke="#ececec" stroke-width="0.55">as Table</text>
<path d="M1959 161.2 H2014 M1959 183 H2014 M1969 151 V193 M2003 151 V193" stroke="#a2a2a2" stroke-width="2" fill="none" />
<rect x="1959" y="151" width="55" height="42" fill="none" stroke="#e8e8e8" stroke-width="2.2"/>
<rect x="1969" y="161.2" width="34" height="21.8" fill="#2a63ae" stroke="#86bdf0" stroke-width="1.8"/>
<path d="M1988 187 L2012 161 Q2018 155 2017 163 L1996 194 Z" stroke="#2b2b2b" stroke-width="5" fill="#2b2b2b" />
<path d="M1988 187 L2012 161 Q2018 155 2017 163 L1996 194 Z" stroke="#dcdcdc" stroke-width="2" fill="#2b2b2b" stroke-linecap="round" stroke-linejoin="round"/>
<path d="M1972 200 Q1976 191 1984 187.5 Q1993 186 1994 193 Q1991 202 1972 200 Z" stroke="#86bdf0" stroke-width="1.6" fill="#2a63ae" />
<path d="M2028 169 L2034.0 176.6 L2040 169" stroke="#ffffff" stroke-width="3" fill="none" stroke-linecap="round" stroke-linejoin="round"/>
<text x="1978" y="232" font-family="Liberation Sans" font-size="21" font-weight="normal" font-style="normal" fill="#ececec" text-anchor="start" textLength="37" lengthAdjust="spacingAndGlyphs"  stroke="#ececec" stroke-width="0.55">Cell</text>
<text x="1966" y="256" font-family="Liberation Sans" font-size="21" font-weight="normal" font-style="normal" fill="#ececec" text-anchor="start" textLength="60.5" lengthAdjust="spacingAndGlyphs"  stroke="#ececec" stroke-width="0.55">Styles</text>
<path d="M2097 165 H2152 M2097 179 H2152 M2115 151 V193 M2133 151 V193" stroke="#a2a2a2" stroke-width="2" fill="none" />
<rect x="2097" y="151" width="55" height="42" fill="none" stroke="#e8e8e8" stroke-width="2.2"/>
<path d="M2106 164.5 H2155.5 V179.5 H2106 L2101 172 Z" stroke="#86bdf0" stroke-width="1.8" fill="#2a63ae" />
<path d="M2119 165 V179 M2137 165 V179" stroke="#86bdf0" stroke-width="1.8" fill="none" />
<path d="M2092.5 171.5 H2118" stroke="#2b2b2b" stroke-width="5" fill="none" />
<path d="M2106 158 L2092.5 171.5 L2106 185 M2092.5 171.5 H2118" stroke="#6aa6e6" stroke-width="2.2" fill="none" />
<path d="M2165.5 169 L2171.6 176.6 L2177.7 169" stroke="#ffffff" stroke-width="3" fill="none" stroke-linecap="round" stroke-linejoin="round"/>
<text x="2106" y="232" font-family="Liberation Sans" font-size="21" font-weight="normal" font-style="normal" fill="#ececec" text-anchor="start" textLength="56.7" lengthAdjust="spacingAndGlyphs"  stroke="#ececec" stroke-width="0.55">Insert</text>
<path d="M2216 151 V193 M2233.5 151 V158 M2233.5 186 V193" stroke="#a2a2a2" stroke-width="2" fill="none" />
<path d="M2197 163.5 V151 H2252 V158 M2197 180.5 V193 H2252 V186" stroke="#e8e8e8" stroke-width="2.2" fill="none" />
<path d="M2204 164.5 H2231 L2238 172 L2231 179.5 H2204 Z" stroke="#86bdf0" stroke-width="1.8" fill="#2a63ae" />
<path d="M2217 165 V179" stroke="#86bdf0" stroke-width="1.8" fill="none" />
<path d="M2232 161.5 L2254.5 184 M2254.5 161.5 L2232 184" stroke="#d9625a" stroke-width="2.2" fill="none" />
<path d="M2265.7 169 L2271.35 176.6 L2277 169" stroke="#ffffff" stroke-width="3" fill="none" stroke-linecap="round" stroke-linejoin="round"/>
<text x="2203" y="232" font-family="Liberation Sans" font-size="21" font-weight="normal" font-style="normal" fill="#ececec" text-anchor="start" textLength="63" lengthAdjust="spacingAndGlyphs"  stroke="#ececec" stroke-width="0.55">Delete</text>
<path d="M2297 165 H2352 M2297 179 H2352 M2310.5 151 V193 M2337.5 151 V193" stroke="#a2a2a2" stroke-width="2" fill="none" />
<rect x="2297" y="151" width="55" height="42" fill="none" stroke="#e8e8e8" stroke-width="2.2"/>
<rect x="2310.5" y="165" width="27" height="14" fill="#2a63ae" stroke="#86bdf0" stroke-width="1.8"/>
<path d="M2309 140 V147 M2339 140 V147 M2309 143.5 H2339" stroke="#5b9be0" stroke-width="2.2" fill="none" />
<path d="M2366 169 L2371.75 176.6 L2377.5 169" stroke="#ffffff" stroke-width="3" fill="none" stroke-linecap="round" stroke-linejoin="round"/>
<text x="2300.6" y="232" font-family="Liberation Sans" font-size="21" font-weight="normal" font-style="normal" fill="#ececec" text-anchor="start" textLength="70" lengthAdjust="spacingAndGlyphs"  stroke="#ececec" stroke-width="0.55">Format</text>
<path d="M2460 148 V143.5 H2437 L2450 156 L2437 168.5 H2460 V164" stroke="#d8d8d8" stroke-width="2" fill="none" stroke-linecap="round" stroke-linejoin="round"/>
<path d="M2476 154 L2482.0 161 L2488 154" stroke="#ffffff" stroke-width="3" fill="none" stroke-linecap="round" stroke-linejoin="round"/>
<rect x="2433" y="187" width="30" height="25.5" fill="none" stroke="#d8d8d8" stroke-width="2"/>
<rect x="2433" y="193" width="30" height="2" fill="#d8d8d8" />
<path d="M2448 198 V208 M2443 203.5 L2448 208.5 L2453 203.5" stroke="#4a8fd6" stroke-width="2" fill="none" stroke-linecap="round" stroke-linejoin="round"/>
<path d="M2476 197.5 L2482.0 205 L2488 197.5" stroke="#ffffff" stroke-width="3" fill="none" stroke-linecap="round" stroke-linejoin="round"/>
<path d="M2433 250 L2450 232 L2463 244 L2446 259 Z" stroke="#c77bd0" stroke-width="2" fill="none" stroke-linecap="round" stroke-linejoin="round"/>
<path d="M2433 250 L2441 241.5 L2454 253.5 L2446 259 Z" stroke="none" stroke-width="2" fill="#8e3b9a" />
<path d="M2476 241.5 L2482.0 248.8 L2488 241.5" stroke="#ffffff" stroke-width="3" fill="none" stroke-linecap="round" stroke-linejoin="round"/>
<text x="2506" y="169.5" font-family="Liberation Sans" font-size="27" font-weight="normal" font-style="normal" fill="#4a8fd6" text-anchor="start" textLength="20" lengthAdjust="spacingAndGlyphs" >A</text>
<path d="M2508 174.5 H2524 L2507 197.5 H2524" stroke="#d0d0d0" stroke-width="2" fill="none" />
<path d="M2531 159 H2561 L2550 172 V189 H2542 V172 Z" stroke="#d8d8d8" stroke-width="2" fill="none" stroke-linecap="round" stroke-linejoin="round"/>
<path d="M2576 169 L2582.0 177 L2588 169" stroke="#ffffff" stroke-width="3" fill="none" stroke-linecap="round" stroke-linejoin="round"/>
<text x="2514.6" y="231.5" font-family="Liberation Sans" font-size="21" font-weight="normal" font-style="normal" fill="#ececec" text-anchor="start" textLength="62" lengthAdjust="spacingAndGlyphs"  stroke="#ececec" stroke-width="0.55">Sort &amp;</text>
<text x="2520.7" y="255.6" font-family="Liberation Sans" font-size="21" font-weight="normal" font-style="normal" fill="#ececec" text-anchor="start" textLength="50" lengthAdjust="spacingAndGlyphs"  stroke="#ececec" stroke-width="0.55">Filter</text>
<circle cx="2641" cy="164.8" r="20.3" fill="none" stroke="#d8d8d8" stroke-width="2" />
<path d="M2626 180.5 L2604.5 201" stroke="#d8d8d8" stroke-width="2" fill="none" />
<path d="M2676 169 L2682.0 177 L2688 169" stroke="#ffffff" stroke-width="3" fill="none" stroke-linecap="round" stroke-linejoin="round"/>
<text x="2613" y="231.5" font-family="Liberation Sans" font-size="21" font-weight="normal" font-style="normal" fill="#ececec" text-anchor="start" textLength="62.8" lengthAdjust="spacingAndGlyphs"  stroke="#ececec" stroke-width="0.55">Find &amp;</text>
<text x="2613" y="255.6" font-family="Liberation Sans" font-size="21" font-weight="normal" font-style="normal" fill="#ececec" text-anchor="start" textLength="62" lengthAdjust="spacingAndGlyphs"  stroke="#ececec" stroke-width="0.55">Select</text>
<rect x="2749" y="141" width="62" height="61" fill="none" stroke="#cfcfcf" stroke-width="2.5"/>
<rect x="2750" y="143" width="60" height="8" fill="#6a6a6a" />
<path d="M2750 168 H2760 M2800 168 H2810 M2750 184 H2810 M2768 184 V201 M2790 184 V201" stroke="#8a8a8a" stroke-width="2.5" fill="none" />
<circle cx="2778" cy="165" r="19.5" fill="#2b2b2b" stroke="#cfcfcf" stroke-width="2.5" />
<rect x="2767" y="164" width="5" height="11" fill="#8a8a8a" />
<rect x="2773" y="154" width="6" height="21" fill="#dcdcdc" />
<rect x="2780" y="159" width="6" height="16" fill="#3a73c4" stroke="#7fb0e8" stroke-width="1.2"/>
<path d="M2792 179 L2811 201" stroke="#cfcfcf" stroke-width="3" fill="none" />
<text x="2740.4" y="231.5" font-family="Liberation Sans" font-size="21" font-weight="normal" font-style="normal" fill="#ececec" text-anchor="start" textLength="77.6" lengthAdjust="spacingAndGlyphs"  stroke="#ececec" stroke-width="0.55">Analyze</text>
<text x="2756.4" y="255.6" font-family="Liberation Sans" font-size="21" font-weight="normal" font-style="normal" fill="#ececec" text-anchor="start" textLength="45.2" lengthAdjust="spacingAndGlyphs"  stroke="#ececec" stroke-width="0.55">Data</text>
<text x="20" y="310.4" font-family="Liberation Sans" font-size="24.5" font-weight="normal" font-style="normal" fill="#e8e8e8" text-anchor="start" textLength="29" lengthAdjust="spacingAndGlyphs"  stroke="#e8e8e8" stroke-width="0.5">A1</text>
<path d="M153 285 L160.5 297 H145.5 Z" stroke="none" stroke-width="2" fill="#b4b4b4" />
<path d="M153 321 L160.5 309 H145.5 Z" stroke="none" stroke-width="2" fill="#b4b4b4" />
<path d="M202 294 L220 312 M220 294 L202 312" stroke="#5c5c5c" stroke-width="3.2" fill="none" />
<path d="M257 303 L266 312 L283 294" stroke="#5c5c5c" stroke-width="3.2" fill="none" />
<text x="314" y="312" font-family="Liberation Serif" font-size="30" font-weight="normal" font-style="italic" fill="#9c9c9c" text-anchor="start" textLength="31" lengthAdjust="spacingAndGlyphs" >fx</text>
<rect x="360" y="284" width="2454" height="38" fill="#393939" rx="4" />
<text x="377.5" y="312.4" font-family="Liberation Sans" font-size="25.5" font-weight="normal" font-style="normal" fill="#ffffff" text-anchor="start" textLength="117" lengthAdjust="spacingAndGlyphs"  stroke="#ffffff" stroke-width="0.5">Product ID</text>
<path d="M2820 297 H2838 L2829 309 Z" stroke="none" stroke-width="2" fill="#c8c8c8" />
<circle cx="173" cy="1469.5" r="3.5" fill="none" stroke="#d0d0d0" stroke-width="1.8" />
<path d="M159 1470 L167 1475 L167 1492 L173 1493 M187 1470 L179 1475 L179 1480" stroke="#d0d0d0" stroke-width="1.8" fill="none" stroke-linecap="round" stroke-linejoin="round"/>
<path d="M176 1489 L181 1494 L189 1484" stroke="#d0d0d0" stroke-width="1.8" fill="none" stroke-linecap="round" stroke-linejoin="round"/>
<rect x="2206" y="1459" width="73.7" height="43" fill="#5a5a5a" />
<rect x="2231" y="1469" width="25" height="24" fill="none" stroke="#f4f4f4" stroke-width="2"/>
<line x1="2239.3333333333335" y1="1469" x2="2239.3333333333335" y2="1493" stroke="#f4f4f4" stroke-width="2"/>
<line x1="2247.6666666666665" y1="1469" x2="2247.6666666666665" y2="1493" stroke="#f4f4f4" stroke-width="2"/>
<line x1="2231" y1="1477.0" x2="2256" y2="1477.0" stroke="#f4f4f4" stroke-width="2"/>
<line x1="2231" y1="1485.0" x2="2256" y2="1485.0" stroke="#f4f4f4" stroke-width="2"/>
<rect x="2301.5" y="1469" width="27" height="24" fill="none" stroke="#f0f0f0" stroke-width="2"/>
<rect x="2307" y="1474" width="16" height="14" fill="none" stroke="#f0f0f0" stroke-width="2"/>
<path d="M2310 1478 H2320 M2310 1481 H2320 M2310 1484 H2320" stroke="#f0f0f0" stroke-width="1.5" fill="none" />
<path d="M2373 1469 H2399 V1493 H2373 Z M2373 1482 H2385 V1469 M2381 1469 V1482" stroke="#f0f0f0" stroke-width="2" fill="none" />
<rect x="2438" y="1479.5" width="15.8" height="3.5" fill="#ffffff" />
<rect x="2468" y="1478" width="199.6" height="6.4" fill="#707070" rx="3.2" />
<circle cx="2568" cy="1481" r="16" fill="#a8a8a8" stroke="none" stroke-width="2" />
<rect x="2682" y="1479.5" width="16" height="3.5" fill="#ffffff" />
<rect x="2688.2" y="1473" width="3.5" height="16" fill="#ffffff" />
<text x="2732.6" y="1490" font-family="Liberation Sans" font-size="23.5" font-weight="normal" font-style="normal" fill="#f0f0f0" text-anchor="start" textLength="62" lengthAdjust="spacingAndGlyphs"  stroke="#f0f0f0" stroke-width="0.3">100%</text></svg></body></html>
